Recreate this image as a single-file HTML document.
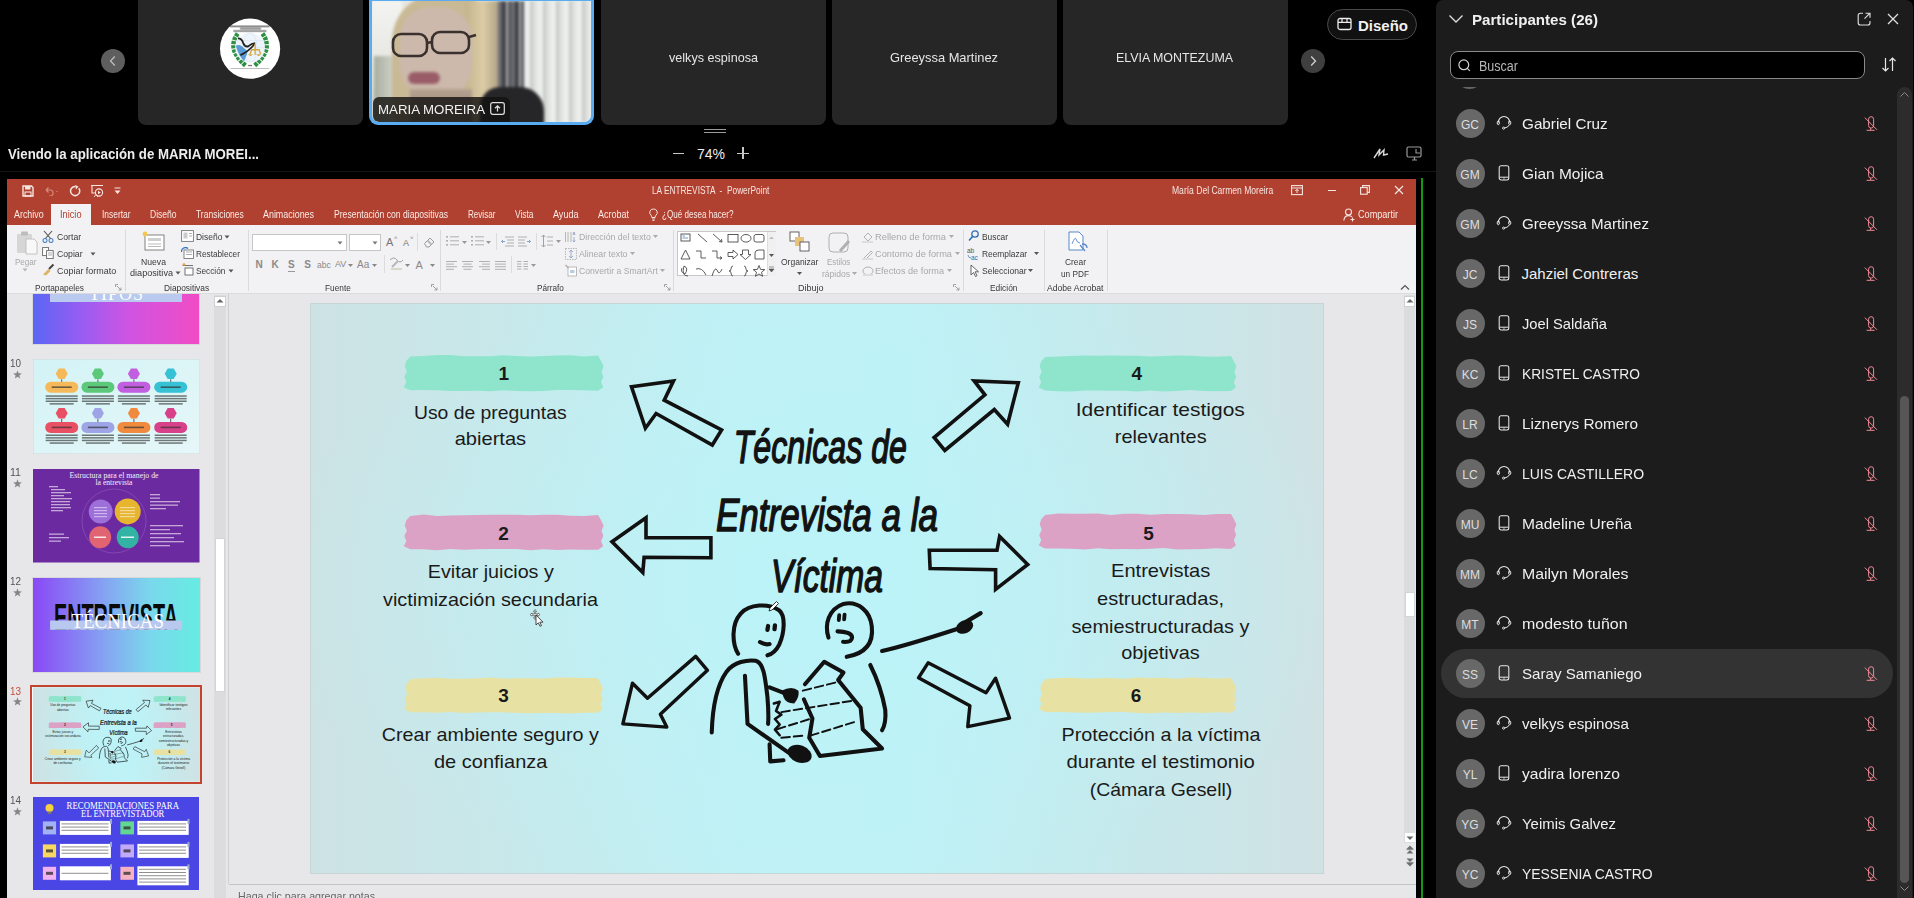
<!DOCTYPE html>
<html><head><meta charset="utf-8"><style>
*{margin:0;padding:0;box-sizing:border-box}
html,body{width:1914px;height:898px;overflow:hidden;background:#000;font-family:"Liberation Sans",sans-serif;position:relative}
.a{position:absolute}
.t{position:absolute;white-space:pre;line-height:1}
.navc{position:absolute;width:24px;height:24px;border-radius:12px;background:#5e5e5e}
</style></head><body>
<div class="navc" style="left:101px;top:49px"><svg width="24" height="24" viewBox="0 0 24 24"><path d="M13.8 7.5 L9.5 12 L13.8 16.5" fill="none" stroke="#bdbdbd" stroke-width="1.3"/></svg></div>
<div class="navc" style="left:1301px;top:49px;background:#3f3f3f"><svg width="24" height="24" viewBox="0 0 24 24"><path d="M10.2 7.5 L14.5 12 L10.2 16.5" fill="none" stroke="#d0d0d0" stroke-width="1.3"/></svg></div>
<div class="a" style="left:138px;top:0px;width:225px;height:125px;background:#262626;border-radius:0 0 8px 8px"></div>
<div class="a" style="left:601px;top:0px;width:225px;height:125px;background:#262626;border-radius:0 0 8px 8px"></div>
<div class="a" style="left:832px;top:0px;width:225px;height:125px;background:#262626;border-radius:0 0 8px 8px"></div>
<div class="a" style="left:1063px;top:0px;width:225px;height:125px;background:#262626;border-radius:0 0 8px 8px"></div>
<svg class="a" style="left:215px;top:15px" width="70" height="70" viewBox="0 0 898 898">
<circle cx="450" cy="432" r="386" fill="#fff"/>
<g fill="#444" opacity="0.75"><rect x="195" y="135" width="505" height="20"/><rect x="320" y="165" width="270" height="18"/><rect x="235" y="195" width="425" height="20"/><rect x="200" y="680" width="495" height="10" opacity="0.6"/><rect x="425" y="640" width="50" height="16"/></g>
<g fill="none" stroke="#2f8f45" stroke-width="58" stroke-dasharray="42 12"><path d="M292,238 Q140,440 400,655"/><path d="M608,238 Q760,440 500,655"/></g>
<circle cx="450" cy="420" r="190" fill="#eef4fb"/>
<g fill="none" stroke="#b8cfe8" stroke-width="5" opacity="0.7"><ellipse cx="450" cy="420" rx="90" ry="190"/><path d="M260 420 H640 M280 330 H620 M280 510 H620"/></g>
<path d="M268,395 Q300,370 345,400 L420,465 Q405,530 372,595 Q300,520 268,395 Z" fill="#5b9bd5"/>
<path d="M295,300 Q345,300 362,360 Q385,415 425,402 Q470,360 515,360" fill="none" stroke="#222" stroke-width="24"/>
<path d="M325,515 Q430,470 505,375" fill="none" stroke="#222" stroke-width="22"/>
<g fill="none" stroke="#d4aa3c" stroke-width="18"><path d="M515,370 L515,510 M465,445 L575,445 M470 445 L450 500 M565 445 L585 500"/></g>
<g fill="#d4aa3c"><path d="M425 505 Q455 545 485 505 Z"/><path d="M530 505 Q560 545 590 505 Z"/></g>
</svg>
<div class="a" style="left:369px;top:0;width:225px;height:125px;border-radius:0 0 9px 9px;background:#5aacf2"></div>
<div class="a" style="left:372px;top:1px;width:219px;height:121px;border-radius:0 0 7px 7px;overflow:hidden;background:#e6e7e3">
 <div class="a" style="left:0;top:0;width:219px;height:121px;filter:blur(1.8px)">
  <div class="a" style="left:0;top:0;width:30px;height:121px;background:linear-gradient(180deg,#f3f4f1,#e8e9e4 45%,#c4c8bc)"></div>
  <div class="a" style="left:2px;top:55px;width:20px;height:66px;background:linear-gradient(90deg,#a8ae9f,#cfd2c8)"></div>
  <div class="a" style="left:20px;top:-8px;width:110px;height:135px;border-radius:48px 52px 10px 10px;background:#c9b994"></div>
  <div class="a" style="left:93px;top:0;width:36px;height:121px;background:linear-gradient(90deg,#c4b48e,#dccca6 50%,#a89c80)"></div>
  <div class="a" style="left:28px;top:6px;width:72px;height:92px;border-radius:30px 32px 34px 34px;background:#ccb9ac"></div>
  <div class="a" style="left:38px;top:88px;width:62px;height:33px;background:linear-gradient(180deg,#b7a290,#8a7a6c)"></div>
  <div class="a" style="left:126px;top:0;width:26px;height:121px;background:repeating-linear-gradient(90deg,#6c6e72 0 4px,#3c3e44 4px 8px,#b8bab8 8px 10px,#50525a 10px 13px)"></div>
  <div class="a" style="left:152px;top:0;width:67px;height:121px;background:repeating-linear-gradient(90deg,#eceeeb 0 6px,#c9cbc8 6px 9px,#dfe1de 9px 13px)"></div>
  <div class="a" style="left:108px;top:86px;width:64px;height:42px;border-radius:20px 24px 0 0;background:#262527"></div>
  <div class="a" style="left:36px;top:71px;width:32px;height:12px;border-radius:6px;background:#9a5d68"></div>
 </div>
 <svg class="a" style="left:0;top:0" width="219" height="121"><g fill="none" stroke="#3a302e" stroke-width="2.6"><rect x="21" y="33" width="34" height="22" rx="8"/><rect x="60" y="31" width="37" height="21" rx="8"/><path d="M55 42 L60 41 M97 36 L104 34"/></g></svg>
 <div class="a" style="left:1px;top:96px;width:137px;height:25px;border-radius:6px 6px 0 6px;background:rgba(20,18,17,0.82)"></div>
</div>
<div class="t" style="left:378.00px;top:103.02px;font-size:13.5px;color:#f2f2f2;font-weight:normal;font-style:normal;font-family:'Liberation Sans',sans-serif;transform:scaleX(0.9838);transform-origin:0 0;">MARIA MOREIRA</div>
<svg class="a" style="left:490px;top:102px;" width="15" height="13" viewBox="0 0 15 13"><rect x="0.7" y="0.7" width="13.6" height="11.6" rx="2" fill="none" stroke="#e0e0e0" stroke-width="1.2"/><path d="M7.5 9.5 V4 M5 6.3 L7.5 3.8 L10 6.3" fill="none" stroke="#e0e0e0" stroke-width="1.3"/></svg>
<div class="t" style="left:669.00px;top:50.52px;font-size:13.5px;color:#e6e6e6;font-weight:normal;font-style:normal;font-family:'Liberation Sans',sans-serif;transform:scaleX(0.9339);transform-origin:0 0;">velkys espinosa</div>
<div class="t" style="left:890.00px;top:50.52px;font-size:13.5px;color:#e6e6e6;font-weight:normal;font-style:normal;font-family:'Liberation Sans',sans-serif;transform:scaleX(0.9533);transform-origin:0 0;">Greeyssa Martinez</div>
<div class="t" style="left:1115.50px;top:50.52px;font-size:13.5px;color:#e6e6e6;font-weight:normal;font-style:normal;font-family:'Liberation Sans',sans-serif;transform:scaleX(0.9193);transform-origin:0 0;">ELVIA MONTEZUMA</div>
<div class="a" style="left:1327px;top:9px;width:90px;height:31px;background:#111;border:1px solid #4a4a4a;border-radius:16px"></div>
<svg class="a" style="left:1337px;top:17px;" width="15" height="14" viewBox="0 0 15 14"><rect x="1" y="1.5" width="13" height="11" rx="2" fill="none" stroke="#eee" stroke-width="1.3"/><path d="M1 5.3 H14 M5 1.5 V5.3 M10 1.5 V5.3" stroke="#eee" stroke-width="1.2"/></svg>
<div class="t" style="left:1358.00px;top:17.80px;font-size:15px;color:#f2f2f2;font-weight:bold;font-style:normal;font-family:'Liberation Sans',sans-serif;">Diseño</div>
<div class="a" style="left:704px;top:129px;width:22px;height:1px;background:#9a9a9a;"></div>
<div class="a" style="left:704px;top:132px;width:22px;height:1px;background:#9a9a9a;"></div>
<div class="t" style="left:8.00px;top:147.28px;font-size:14px;color:#ededed;font-weight:bold;font-style:normal;font-family:'Liberation Sans',sans-serif;transform:scaleX(0.9462);transform-origin:0 0;">Viendo la aplicación de MARIA MOREI...</div>
<div class="a" style="left:673px;top:152.5px;width:11px;height:1.5px;background:#c8c8c8;"></div>
<div class="t" style="left:697.00px;top:146.78px;font-size:14px;color:#ededed;font-weight:normal;font-style:normal;font-family:'Liberation Sans',sans-serif;">74%</div>
<div class="a" style="left:737px;top:152.5px;width:12px;height:1.5px;background:#c8c8c8;"></div>
<div class="a" style="left:742.2px;top:147px;width:1.6px;height:12px;background:#c8c8c8;"></div>
<svg class="a" style="left:1372px;top:145px;" width="18" height="16" viewBox="0 0 18 16"><path d="M2 13 L8 4 L7 10 L12 5 L11.5 10 L16 9" fill="none" stroke="#d8d8d8" stroke-width="1.4"/></svg>
<svg class="a" style="left:1406px;top:146px;" width="17" height="15" viewBox="0 0 17 15"><rect x="1" y="1" width="14" height="10" rx="1.5" fill="none" stroke="#9a9a9a" stroke-width="1.2"/><path d="M6 14 H11 M8.5 11 V14" stroke="#9a9a9a" stroke-width="1.2"/><path d="M10 3 V7 H14" fill="none" stroke="#9a9a9a" stroke-width="1.1"/></svg>
<div class="a" style="left:0px;top:171px;width:1436px;height:1px;background:#151515;"></div>
<div class="a" style="left:7px;top:179px;width:1409px;height:719px;background:#e7e6e9;"></div>
<div class="a" style="left:7px;top:179px;width:1409px;height:46px;background:#b0402f;"></div>
<div class="a" style="left:7px;top:225px;width:1409px;height:68px;background:#f2f1f3;"></div>
<div class="a" style="left:7px;top:292.5px;width:1409px;height:1px;background:#dcdbdd;"></div>
<svg class="a" style="left:22px;top:185px;" width="12" height="12" viewBox="0 0 12 12"><path d="M1 1 H9.5 L11 2.5 V11 H1 Z" fill="none" stroke="#f6e6e2" stroke-width="1.4"/><rect x="3" y="1" width="5.5" height="3.5" fill="#f6e6e2"/><rect x="3" y="7" width="6" height="4" fill="none" stroke="#f6e6e2" stroke-width="1.1"/></svg>
<svg class="a" style="left:44px;top:186px;" width="16" height="10" viewBox="0 0 16 10"><path d="M2 4 H7 A3.2 3.2 0 0 1 7 10 H5 M2 4 L4.5 1.5 M2 4 L4.5 6.5" fill="none" stroke="#d68c7c" stroke-width="1.2"/><path d="M12 5 L14 5 L13 6.3 Z" fill="#d68c7c"/></svg>
<svg class="a" style="left:69px;top:185px;" width="12" height="12" viewBox="0 0 12 12"><path d="M9.8 3.2 A4.6 4.6 0 1 1 6 1.4" fill="none" stroke="#f6e6e2" stroke-width="1.5"/><path d="M6 0 L9.5 1.6 L7 4.6 Z" fill="#f6e6e2"/></svg>
<svg class="a" style="left:90px;top:184px;" width="14" height="14" viewBox="0 0 14 14"><path d="M1 1.5 H13 M2 1.5 V9 H6" fill="none" stroke="#f6e6e2" stroke-width="1.1"/><circle cx="9" cy="8.5" r="3.6" fill="none" stroke="#f6e6e2" stroke-width="1.1"/><path d="M8 6.8 L10.8 8.5 L8 10.2 Z" fill="#f6e6e2"/><path d="M4 13 L6 10.5 L8 13" fill="none" stroke="#f6e6e2" stroke-width="0.9"/></svg>
<svg class="a" style="left:114px;top:187px;" width="7" height="8" viewBox="0 0 7 8"><path d="M0.5 1 H6.5" stroke="#f6e6e2" stroke-width="1"/><path d="M0.5 3.5 L6.5 3.5 L3.5 7 Z" fill="#f6e6e2"/></svg>
<div class="t" style="left:651.60px;top:185.60px;font-size:10px;color:#f7e4e0;font-weight:normal;font-style:normal;font-family:'Liberation Sans',sans-serif;transform:scaleX(0.8295);transform-origin:0 0;">LA ENTREVISTA  -  PowerPoint</div>
<div class="t" style="left:1171.80px;top:186.00px;font-size:10px;color:#f7e4e0;font-weight:normal;font-style:normal;font-family:'Liberation Sans',sans-serif;transform:scaleX(0.8550);transform-origin:0 0;">María Del Carmen Moreira</div>
<svg class="a" style="left:1291px;top:185px;" width="12" height="11" viewBox="0 0 12 11"><rect x="0.6" y="0.6" width="10.8" height="9" fill="none" stroke="#f6e6e2" stroke-width="1.1"/><path d="M0.6 3 H11.4 M6 4.5 V8 M4.3 6 L6 4.3 L7.7 6" fill="none" stroke="#f6e6e2" stroke-width="1"/></svg>
<div class="a" style="left:1327.5px;top:190px;width:8px;height:1.2px;background:#f6e6e2;"></div>
<svg class="a" style="left:1360px;top:185px;" width="10" height="10" viewBox="0 0 10 10"><rect x="0.6" y="2.6" width="6.6" height="6.6" fill="none" stroke="#f6e6e2" stroke-width="1.1"/><path d="M2.6 2.6 V0.6 H9.4 V7.4 H7.2" fill="none" stroke="#f6e6e2" stroke-width="1.1"/></svg>
<svg class="a" style="left:1394px;top:185px;" width="10" height="10" viewBox="0 0 10 10"><path d="M1 1 L9 9 M9 1 L1 9" stroke="#f6e6e2" stroke-width="1.2"/></svg>
<div class="a" style="left:51.4px;top:204px;width:39.6px;height:21px;background:#f2f1f3;"></div>
<div class="t" style="left:13.80px;top:209.80px;font-size:10px;color:#fbeae6;font-weight:normal;font-style:normal;font-family:'Liberation Sans',sans-serif;transform:scaleX(0.8877);transform-origin:0 0;">Archivo</div>
<div class="t" style="left:101.50px;top:209.80px;font-size:10px;color:#fbeae6;font-weight:normal;font-style:normal;font-family:'Liberation Sans',sans-serif;transform:scaleX(0.8407);transform-origin:0 0;">Insertar</div>
<div class="t" style="left:149.70px;top:209.80px;font-size:10px;color:#fbeae6;font-weight:normal;font-style:normal;font-family:'Liberation Sans',sans-serif;transform:scaleX(0.8545);transform-origin:0 0;">Diseño</div>
<div class="t" style="left:196.00px;top:209.80px;font-size:10px;color:#fbeae6;font-weight:normal;font-style:normal;font-family:'Liberation Sans',sans-serif;transform:scaleX(0.8487);transform-origin:0 0;">Transiciones</div>
<div class="t" style="left:263.00px;top:209.80px;font-size:10px;color:#fbeae6;font-weight:normal;font-style:normal;font-family:'Liberation Sans',sans-serif;transform:scaleX(0.8908);transform-origin:0 0;">Animaciones</div>
<div class="t" style="left:334.00px;top:209.80px;font-size:10px;color:#fbeae6;font-weight:normal;font-style:normal;font-family:'Liberation Sans',sans-serif;transform:scaleX(0.8617);transform-origin:0 0;">Presentación con diapositivas</div>
<div class="t" style="left:468.20px;top:209.80px;font-size:10px;color:#fbeae6;font-weight:normal;font-style:normal;font-family:'Liberation Sans',sans-serif;transform:scaleX(0.8083);transform-origin:0 0;">Revisar</div>
<div class="t" style="left:515.00px;top:209.80px;font-size:10px;color:#fbeae6;font-weight:normal;font-style:normal;font-family:'Liberation Sans',sans-serif;transform:scaleX(0.8390);transform-origin:0 0;">Vista</div>
<div class="t" style="left:553.00px;top:209.80px;font-size:10px;color:#fbeae6;font-weight:normal;font-style:normal;font-family:'Liberation Sans',sans-serif;transform:scaleX(0.9051);transform-origin:0 0;">Ayuda</div>
<div class="t" style="left:598.00px;top:209.80px;font-size:10px;color:#fbeae6;font-weight:normal;font-style:normal;font-family:'Liberation Sans',sans-serif;transform:scaleX(0.8995);transform-origin:0 0;">Acrobat</div>
<div class="t" style="left:662.00px;top:209.80px;font-size:10px;color:#fbeae6;font-weight:normal;font-style:normal;font-family:'Liberation Sans',sans-serif;transform:scaleX(0.8078);transform-origin:0 0;">¿Qué desea hacer?</div>
<div class="t" style="left:60.00px;top:209.80px;font-size:10px;color:#b0402f;font-weight:normal;font-style:normal;font-family:'Liberation Sans',sans-serif;transform:scaleX(0.9210);transform-origin:0 0;">Inicio</div>
<svg class="a" style="left:649px;top:208px;" width="9" height="13" viewBox="0 0 9 13"><path d="M4.5 1 A3.5 3.5 0 0 1 7 7.2 Q6.2 8 6.2 9.5 H2.8 Q2.8 8 2 7.2 A3.5 3.5 0 0 1 4.5 1 Z" fill="none" stroke="#f6e6e2" stroke-width="1"/><path d="M3 11 H6 M3.5 12.5 H5.5" stroke="#f6e6e2" stroke-width="0.9"/></svg>
<svg class="a" style="left:1343px;top:208px;" width="13" height="14" viewBox="0 0 13 14"><circle cx="5.5" cy="4" r="3" fill="none" stroke="#f6e6e2" stroke-width="1.1"/><path d="M0.8 12.5 Q1.5 7.6 5.5 7.6 Q8 7.6 9 9" fill="none" stroke="#f6e6e2" stroke-width="1.1"/><path d="M9.5 9.5 V13.5 M7.5 11.5 H11.5" stroke="#f6e6e2" stroke-width="1.1"/></svg>
<div class="t" style="left:1358.30px;top:210.00px;font-size:10px;color:#fbeae6;font-weight:normal;font-style:normal;font-family:'Liberation Sans',sans-serif;transform:scaleX(0.9112);transform-origin:0 0;">Compartir</div>
<div class="a" style="left:124.6px;top:230px;width:1px;height:61px;background:#dadada;"></div>
<div class="a" style="left:247.8px;top:230px;width:1px;height:61px;background:#dadada;"></div>
<div class="a" style="left:440px;top:230px;width:1px;height:61px;background:#dadada;"></div>
<div class="a" style="left:672.5px;top:230px;width:1px;height:61px;background:#dadada;"></div>
<div class="a" style="left:962.6px;top:230px;width:1px;height:61px;background:#dadada;"></div>
<div class="a" style="left:1044.4px;top:230px;width:1px;height:61px;background:#dadada;"></div>
<div class="a" style="left:1106.5px;top:230px;width:1px;height:61px;background:#dadada;"></div>
<div class="a" style="left:417px;top:233px;width:1px;height:18px;background:#dcdcdc;"></div>
<div class="a" style="left:383.7px;top:255px;width:1px;height:18px;background:#dcdcdc;"></div>
<div class="a" style="left:496.2px;top:233px;width:1px;height:17px;background:#dcdcdc;"></div>
<div class="a" style="left:535.9px;top:233px;width:1px;height:17px;background:#dcdcdc;"></div>
<div class="a" style="left:511px;top:256px;width:1px;height:17px;background:#dcdcdc;"></div>
<div class="t" style="left:34.60px;top:282.84px;font-size:9.5px;color:#383838;font-weight:normal;font-style:normal;font-family:'Liberation Sans',sans-serif;transform:scaleX(0.8735);transform-origin:0 0;">Portapapeles</div>
<div class="t" style="left:163.50px;top:282.84px;font-size:9.5px;color:#383838;font-weight:normal;font-style:normal;font-family:'Liberation Sans',sans-serif;transform:scaleX(0.8806);transform-origin:0 0;">Diapositivas</div>
<div class="t" style="left:324.80px;top:282.84px;font-size:9.5px;color:#383838;font-weight:normal;font-style:normal;font-family:'Liberation Sans',sans-serif;transform:scaleX(0.8723);transform-origin:0 0;">Fuente</div>
<div class="t" style="left:536.70px;top:282.84px;font-size:9.5px;color:#383838;font-weight:normal;font-style:normal;font-family:'Liberation Sans',sans-serif;transform:scaleX(0.8635);transform-origin:0 0;">Párrafo</div>
<div class="t" style="left:798.40px;top:282.84px;font-size:9.5px;color:#383838;font-weight:normal;font-style:normal;font-family:'Liberation Sans',sans-serif;transform:scaleX(0.9505);transform-origin:0 0;">Dibujo</div>
<div class="t" style="left:989.80px;top:282.84px;font-size:9.5px;color:#383838;font-weight:normal;font-style:normal;font-family:'Liberation Sans',sans-serif;transform:scaleX(0.8826);transform-origin:0 0;">Edición</div>
<div class="t" style="left:1047.40px;top:282.84px;font-size:9.5px;color:#383838;font-weight:normal;font-style:normal;font-family:'Liberation Sans',sans-serif;transform:scaleX(0.9065);transform-origin:0 0;">Adobe Acrobat</div>
<svg class="a" style="left:115px;top:284px;" width="7" height="7" viewBox="0 0 7 7"><path d="M0.5 0.5 H3 M0.5 0.5 V3 M2 2 L6 6 M6 3.5 V6 H3.5" fill="none" stroke="#8d8d8d" stroke-width="0.8"/></svg>
<svg class="a" style="left:430.9px;top:284px;" width="7" height="7" viewBox="0 0 7 7"><path d="M0.5 0.5 H3 M0.5 0.5 V3 M2 2 L6 6 M6 3.5 V6 H3.5" fill="none" stroke="#8d8d8d" stroke-width="0.8"/></svg>
<svg class="a" style="left:663.7px;top:284px;" width="7" height="7" viewBox="0 0 7 7"><path d="M0.5 0.5 H3 M0.5 0.5 V3 M2 2 L6 6 M6 3.5 V6 H3.5" fill="none" stroke="#8d8d8d" stroke-width="0.8"/></svg>
<svg class="a" style="left:953px;top:284px;" width="7" height="7" viewBox="0 0 7 7"><path d="M0.5 0.5 H3 M0.5 0.5 V3 M2 2 L6 6 M6 3.5 V6 H3.5" fill="none" stroke="#8d8d8d" stroke-width="0.8"/></svg>
<svg class="a" style="left:1400px;top:284px;" width="10" height="7" viewBox="0 0 10 7"><path d="M1 5.5 L5 1.5 L9 5.5" fill="none" stroke="#555" stroke-width="1.2"/></svg>
<svg class="a" style="left:15px;top:230px;" width="24" height="26" viewBox="0 0 24 26"><rect x="2" y="4" width="15" height="19" rx="1" fill="#d6d6d6"/><rect x="6" y="1.5" width="7" height="4" rx="1" fill="#bdbdbd"/><path d="M11 9 H19 L22 12 V24 H11 Z" fill="#f8f8f8" stroke="#bdbdbd" stroke-width="0.9"/></svg>
<div class="t" style="left:14.50px;top:256.94px;font-size:9.5px;color:#a9a9a9;font-weight:normal;font-style:normal;font-family:'Liberation Sans',sans-serif;transform:scaleX(0.8481);transform-origin:0 0;">Pegar</div>
<svg class="a" style="left:22px;top:268px;" width="6" height="4" viewBox="0 0 6 4"><path d="M0.5 0.5 H5.5 L3 3.5 Z" fill="#b5b5b5"/></svg>
<svg class="a" style="left:42px;top:230px;" width="12" height="13" viewBox="0 0 12 13"><path d="M2 1 L9 9 M10 1 L3 9" stroke="#505050" stroke-width="1.1"/><circle cx="3" cy="10.5" r="2" fill="none" stroke="#4a84c4" stroke-width="1.1"/><circle cx="9" cy="10.5" r="2" fill="none" stroke="#4a84c4" stroke-width="1.1"/></svg>
<div class="t" style="left:56.70px;top:231.84px;font-size:9.5px;color:#3a3a3a;font-weight:normal;font-style:normal;font-family:'Liberation Sans',sans-serif;transform:scaleX(0.9131);transform-origin:0 0;">Cortar</div>
<svg class="a" style="left:42px;top:247px;" width="12" height="12" viewBox="0 0 12 12"><rect x="0.6" y="0.6" width="6" height="8" fill="#fff" stroke="#666" stroke-width="0.9"/><rect x="4.6" y="3.6" width="6.6" height="8" fill="#fff" stroke="#666" stroke-width="0.9"/><path d="M6 6 H10 M6 8 H10" stroke="#888" stroke-width="0.7"/></svg>
<div class="t" style="left:56.70px;top:248.64px;font-size:9.5px;color:#3a3a3a;font-weight:normal;font-style:normal;font-family:'Liberation Sans',sans-serif;transform:scaleX(0.9148);transform-origin:0 0;">Copiar</div>
<svg class="a" style="left:89.5px;top:251.5px;" width="6" height="4" viewBox="0 0 6 4"><path d="M0.5 0.5 H5.5 L3 3.5 Z" fill="#555"/></svg>
<svg class="a" style="left:42px;top:263px;" width="13" height="13" viewBox="0 0 13 13"><path d="M7 6 L11.5 1.5" stroke="#444" stroke-width="2"/><path d="M1 11.5 L6.5 6 L8.5 8 L4 12.5 Z" fill="#d9b463"/></svg>
<div class="t" style="left:56.70px;top:265.74px;font-size:9.5px;color:#3a3a3a;font-weight:normal;font-style:normal;font-family:'Liberation Sans',sans-serif;transform:scaleX(0.9422);transform-origin:0 0;">Copiar formato</div>
<svg class="a" style="left:141px;top:230px;" width="24" height="21" viewBox="0 0 24 21"><rect x="4" y="5" width="19" height="15" fill="#fff" stroke="#777" stroke-width="0.9"/><rect x="7" y="8" width="13" height="3" fill="#cfcfcf"/><path d="M7 14 H20 M7 16.5 H20" stroke="#aaa" stroke-width="0.8"/><circle cx="4" cy="4" r="2.4" fill="#f2c94c"/></svg>
<div class="t" style="left:141.00px;top:256.94px;font-size:9.5px;color:#3a3a3a;font-weight:normal;font-style:normal;font-family:'Liberation Sans',sans-serif;transform:scaleX(0.9104);transform-origin:0 0;">Nueva</div>
<div class="t" style="left:129.60px;top:268.24px;font-size:9.5px;color:#3a3a3a;font-weight:normal;font-style:normal;font-family:'Liberation Sans',sans-serif;transform:scaleX(0.9579);transform-origin:0 0;">diapositiva</div>
<svg class="a" style="left:174.5px;top:271px;" width="6" height="4" viewBox="0 0 6 4"><path d="M0.5 0.5 H5.5 L3 3.5 Z" fill="#555"/></svg>
<svg class="a" style="left:181px;top:230px;" width="13" height="12" viewBox="0 0 13 12"><rect x="0.6" y="0.6" width="11.8" height="10.8" fill="#fff" stroke="#777" stroke-width="0.9"/><rect x="2.5" y="2.5" width="4" height="6" fill="#ccc"/><path d="M8 3.5 H11 M8 6 H11" stroke="#999" stroke-width="0.8"/></svg>
<div class="t" style="left:195.60px;top:231.84px;font-size:9.5px;color:#3a3a3a;font-weight:normal;font-style:normal;font-family:'Liberation Sans',sans-serif;transform:scaleX(0.8927);transform-origin:0 0;">Diseño</div>
<svg class="a" style="left:224px;top:235px;" width="6" height="4" viewBox="0 0 6 4"><path d="M0.5 0.5 H5.5 L3 3.5 Z" fill="#555"/></svg>
<svg class="a" style="left:181px;top:247px;" width="13" height="12" viewBox="0 0 13 12"><rect x="3" y="3" width="9.5" height="8.5" fill="#fff" stroke="#777" stroke-width="0.9"/><path d="M0.5 5 A4 4 0 0 1 7 1.5" fill="none" stroke="#2f74c0" stroke-width="1.2"/><path d="M5 5 H11 M5 7.5 H11" stroke="#999" stroke-width="0.8"/></svg>
<div class="t" style="left:195.60px;top:248.64px;font-size:9.5px;color:#3a3a3a;font-weight:normal;font-style:normal;font-family:'Liberation Sans',sans-serif;transform:scaleX(0.8660);transform-origin:0 0;">Restablecer</div>
<svg class="a" style="left:182px;top:263px;" width="12" height="13" viewBox="0 0 12 13"><rect x="3" y="5" width="8" height="7" fill="#fff" stroke="#666" stroke-width="0.9"/><path d="M0.5 2.5 H11" stroke="#666" stroke-width="0.9"/><circle cx="2" cy="1.5" r="1.3" fill="#f0a030"/></svg>
<div class="t" style="left:195.60px;top:265.74px;font-size:9.5px;color:#3a3a3a;font-weight:normal;font-style:normal;font-family:'Liberation Sans',sans-serif;transform:scaleX(0.8699);transform-origin:0 0;">Sección</div>
<svg class="a" style="left:227.5px;top:268.5px;" width="6" height="4" viewBox="0 0 6 4"><path d="M0.5 0.5 H5.5 L3 3.5 Z" fill="#555"/></svg>
<div class="a" style="left:251.5px;top:234.4px;width:95.8px;height:16.3px;background:#fff;border:1px solid #c6c6c6"></div>
<div class="a" style="left:348.6px;top:234.4px;width:32.6px;height:16.3px;background:#fff;border:1px solid #c6c6c6"></div>
<svg class="a" style="left:337px;top:241px;" width="6" height="4" viewBox="0 0 6 4"><path d="M0.5 0.5 H5.5 L3 3.5 Z" fill="#777"/></svg>
<svg class="a" style="left:372px;top:241px;" width="6" height="4" viewBox="0 0 6 4"><path d="M0.5 0.5 H5.5 L3 3.5 Z" fill="#777"/></svg>
<div class="t" style="left:386.00px;top:237.22px;font-size:11px;color:#777;font-weight:normal;font-style:normal;font-family:'Liberation Sans',sans-serif;">A</div>
<div class="t" style="left:394.00px;top:235.12px;font-size:6px;color:#777;font-weight:normal;font-style:normal;font-family:'Liberation Sans',sans-serif;">˄</div>
<div class="t" style="left:403.00px;top:239.18px;font-size:9px;color:#777;font-weight:normal;font-style:normal;font-family:'Liberation Sans',sans-serif;">A</div>
<div class="t" style="left:410.00px;top:235.12px;font-size:6px;color:#777;font-weight:normal;font-style:normal;font-family:'Liberation Sans',sans-serif;">˅</div>
<svg class="a" style="left:423px;top:236px;" width="13" height="12" viewBox="0 0 13 12"><path d="M1.5 7.5 L7 2 L11 6 L6 11 H3.5 Z" fill="none" stroke="#999" stroke-width="1"/><path d="M4.5 4.5 L8.5 8.5" stroke="#bbb" stroke-width="2"/></svg>
<div class="t" style="left:255.50px;top:260.00px;font-size:10px;color:#8a8a8a;font-weight:bold;font-style:normal;font-family:'Liberation Sans',sans-serif;">N</div>
<div class="t" style="left:271.50px;top:260.00px;font-size:10px;color:#8a8a8a;font-weight:bold;font-style:normal;font-family:'Liberation Sans',sans-serif;">K</div>
<div class="t" style="left:288.00px;top:260.00px;font-size:10px;color:#8a8a8a;font-weight:bold;font-style:normal;font-family:'Liberation Sans',sans-serif;">S</div>
<div class="t" style="left:304.20px;top:260.00px;font-size:10px;color:#8a8a8a;font-weight:bold;font-style:normal;font-family:'Liberation Sans',sans-serif;">S</div>
<div class="t" style="left:317.00px;top:260.72px;font-size:8.5px;color:#8a8a8a;font-weight:normal;font-style:normal;font-family:'Liberation Sans',sans-serif;">abc</div>
<div class="t" style="left:335.00px;top:260.48px;font-size:9px;color:#8a8a8a;font-weight:normal;font-style:normal;font-family:'Liberation Sans',sans-serif;">AV</div>
<div class="t" style="left:357.00px;top:260.00px;font-size:10px;color:#8a8a8a;font-weight:normal;font-style:normal;font-family:'Liberation Sans',sans-serif;">Aa</div>
<div class="a" style="left:288px;top:270.5px;width:6.5px;height:0.8px;background:#999;"></div>
<svg class="a" style="left:348px;top:263.5px;" width="5" height="3" viewBox="0 0 5 3"><path d="M0 0 H5 L2.5 3 Z" fill="#888"/></svg>
<svg class="a" style="left:372px;top:263.5px;" width="5" height="3" viewBox="0 0 5 3"><path d="M0 0 H5 L2.5 3 Z" fill="#888"/></svg>
<svg class="a" style="left:404.5px;top:263.5px;" width="5" height="3" viewBox="0 0 5 3"><path d="M0 0 H5 L2.5 3 Z" fill="#888"/></svg>
<svg class="a" style="left:429.5px;top:263.5px;" width="5" height="3" viewBox="0 0 5 3"><path d="M0 0 H5 L2.5 3 Z" fill="#888"/></svg>
<svg class="a" style="left:389px;top:256px;" width="15" height="14" viewBox="0 0 15 14"><path d="M1 4 Q5 0 8 4 Q11 8 14 4" fill="none" stroke="#999" stroke-width="0.9"/><path d="M3 11 L9 5" stroke="#b8b8b8" stroke-width="2"/><rect x="2" y="12" width="11" height="2" fill="#d8d8c8"/></svg>
<div class="t" style="left:415.50px;top:259.52px;font-size:11px;color:#8a8a8a;font-weight:normal;font-style:normal;font-family:'Liberation Sans',sans-serif;">A</div>
<svg class="a" style="left:445.5px;top:236px;" width="13" height="13" viewBox="0 0 13 13"><rect x="0" y="0" width="2" height="1.6" fill="#b0b0b0"/><rect x="4" y="0.3" width="9" height="1" fill="#b0b0b0"/><rect x="0" y="4" width="2" height="1.6" fill="#b0b0b0"/><rect x="4" y="4.3" width="9" height="1" fill="#b0b0b0"/><rect x="0" y="8" width="2" height="1.6" fill="#b0b0b0"/><rect x="4" y="8.3" width="9" height="1" fill="#b0b0b0"/></svg>
<svg class="a" style="left:461.5px;top:240.5px;" width="5" height="3" viewBox="0 0 5 3"><path d="M0 0 H5 L2.5 3 Z" fill="#999"/></svg>
<svg class="a" style="left:470.5px;top:236px;" width="13" height="13" viewBox="0 0 13 13"><rect x="0" y="0" width="2" height="1.6" fill="#b0b0b0"/><rect x="4" y="0.3" width="9" height="1" fill="#b0b0b0"/><rect x="0" y="4" width="2" height="1.6" fill="#b0b0b0"/><rect x="4" y="4.3" width="9" height="1" fill="#b0b0b0"/><rect x="0" y="8" width="2" height="1.6" fill="#b0b0b0"/><rect x="4" y="8.3" width="9" height="1" fill="#b0b0b0"/></svg>
<svg class="a" style="left:486px;top:240.5px;" width="5" height="3" viewBox="0 0 5 3"><path d="M0 0 H5 L2.5 3 Z" fill="#999"/></svg>
<svg class="a" style="left:501px;top:236px;" width="13" height="11" viewBox="0 0 13 11"><path d="M4 1 H13 M6 4 H13 M6 7 H13 M4 10 H13" stroke="#b0b0b0" stroke-width="1"/><path d="M4 5.5 L0.5 5.5 M2 4 L0.5 5.5 L2 7" fill="none" stroke="#7c9cc8" stroke-width="0.9"/></svg>
<svg class="a" style="left:517.5px;top:236px;" width="13" height="11" viewBox="0 0 13 11"><path d="M0 1 H9 M0 4 H7 M0 7 H7 M0 10 H9" stroke="#b0b0b0" stroke-width="1"/><path d="M9 5.5 L12.5 5.5 M11 4 L12.5 5.5 L11 7" fill="none" stroke="#7c9cc8" stroke-width="0.9"/></svg>
<svg class="a" style="left:541px;top:234px;" width="12" height="14" viewBox="0 0 12 14"><path d="M2.5 1 V13 M0.5 3 L2.5 1 L4.5 3 M0.5 11 L2.5 13 L4.5 11" fill="none" stroke="#999" stroke-width="0.9"/><path d="M6 3 H12 M6 7 H12 M6 11 H12" stroke="#b0b0b0" stroke-width="1"/></svg>
<svg class="a" style="left:555.5px;top:240px;" width="5" height="3" viewBox="0 0 5 3"><path d="M0 0 H5 L2.5 3 Z" fill="#999"/></svg>
<svg class="a" style="left:445.7px;top:260.5px;" width="11" height="9" viewBox="0 0 11 9"><rect x="0" y="0" width="11" height="1" fill="#b0b0b0"/><rect x="0" y="2.6" width="8" height="1" fill="#b0b0b0"/><rect x="0" y="5.2" width="11" height="1" fill="#b0b0b0"/><rect x="0" y="7.8" width="8" height="1" fill="#b0b0b0"/></svg>
<svg class="a" style="left:462px;top:260.5px;" width="11" height="9" viewBox="0 0 11 9"><rect x="0" y="0" width="11" height="1" fill="#b0b0b0"/><rect x="1.5" y="2.6" width="8" height="1" fill="#b0b0b0"/><rect x="0" y="5.2" width="11" height="1" fill="#b0b0b0"/><rect x="1.5" y="7.8" width="8" height="1" fill="#b0b0b0"/></svg>
<svg class="a" style="left:478.7px;top:260.5px;" width="11" height="9" viewBox="0 0 11 9"><rect x="0" y="0" width="11" height="1" fill="#b0b0b0"/><rect x="3" y="2.6" width="8" height="1" fill="#b0b0b0"/><rect x="0" y="5.2" width="11" height="1" fill="#b0b0b0"/><rect x="3" y="7.8" width="8" height="1" fill="#b0b0b0"/></svg>
<svg class="a" style="left:494.9px;top:260.5px;" width="11" height="9" viewBox="0 0 11 9"><rect x="0" y="0" width="11" height="1" fill="#b0b0b0"/><rect x="0" y="2.6" width="11" height="1" fill="#b0b0b0"/><rect x="0" y="5.2" width="11" height="1" fill="#b0b0b0"/><rect x="0" y="7.8" width="11" height="1" fill="#b0b0b0"/></svg>
<svg class="a" style="left:517px;top:260.5px;" width="11" height="9" viewBox="0 0 11 9"><path d="M0 0.5 H4.5 M6.5 0.5 H11 M0 3 H4.5 M6.5 3 H11 M0 5.5 H4.5 M6.5 5.5 H11 M0 8 H4.5 M6.5 8 H11" stroke="#b0b0b0" stroke-width="1"/></svg>
<svg class="a" style="left:531px;top:263.5px;" width="5" height="3" viewBox="0 0 5 3"><path d="M0 0 H5 L2.5 3 Z" fill="#999"/></svg>
<svg class="a" style="left:565px;top:231px;" width="11" height="12" viewBox="0 0 11 12"><path d="M0.5 1 V11 M3 1 V11 M6 1 V11" stroke="#b0b0b0" stroke-width="0.9"/><path d="M8 4 L9 1 L10 4 M8.3 3 H9.7 M9 6 V11 M7.8 9.5 L9 11 L10.2 9.5" fill="none" stroke="#8aa0c0" stroke-width="0.8"/></svg>
<div class="t" style="left:579.20px;top:232.04px;font-size:9.5px;color:#a9a9a9;font-weight:normal;font-style:normal;font-family:'Liberation Sans',sans-serif;transform:scaleX(0.9188);transform-origin:0 0;">Dirección del texto</div>
<svg class="a" style="left:653px;top:235px;" width="5" height="3" viewBox="0 0 5 3"><path d="M0 0 H5 L2.5 3 Z" fill="#aaa"/></svg>
<svg class="a" style="left:565px;top:248px;" width="12" height="12" viewBox="0 0 12 12"><rect x="0.5" y="0.5" width="11" height="11" fill="none" stroke="#aaa" stroke-width="0.8" stroke-dasharray="1.5 1"/><path d="M6 2 V10 M4 4 L6 2 L8 4 M4 8 L6 10 L8 8" fill="none" stroke="#8aa0c0" stroke-width="0.8"/></svg>
<div class="t" style="left:579.20px;top:249.04px;font-size:9.5px;color:#a9a9a9;font-weight:normal;font-style:normal;font-family:'Liberation Sans',sans-serif;transform:scaleX(0.9165);transform-origin:0 0;">Alinear texto</div>
<svg class="a" style="left:629.5px;top:252px;" width="5" height="3" viewBox="0 0 5 3"><path d="M0 0 H5 L2.5 3 Z" fill="#aaa"/></svg>
<svg class="a" style="left:565px;top:264px;" width="12" height="13" viewBox="0 0 12 13"><rect x="3" y="3" width="8.5" height="9" fill="#fff" stroke="#aaa" stroke-width="0.8"/><path d="M0.5 1 L3.5 4" stroke="#aaa" stroke-width="1.2"/><rect x="5" y="6" width="4.5" height="3" fill="#b8cde0"/></svg>
<div class="t" style="left:579.20px;top:266.04px;font-size:9.5px;color:#a9a9a9;font-weight:normal;font-style:normal;font-family:'Liberation Sans',sans-serif;transform:scaleX(0.9102);transform-origin:0 0;">Convertir a SmartArt</div>
<svg class="a" style="left:660px;top:269px;" width="5" height="3" viewBox="0 0 5 3"><path d="M0 0 H5 L2.5 3 Z" fill="#aaa"/></svg>
<div class="a" style="left:677.2px;top:230.9px;width:99.3px;height:44.9px;background:#fff;border:1px solid #c8c8c8"></div>
<div class="a" style="left:766.5px;top:231.5px;width:9.5px;height:44px;background:#f0f0f0;border-left:1px solid #ddd"></div>
<svg class="a" style="left:768px;top:234px;" width="7" height="40" viewBox="0 0 7 40"><path d="M1 5 L3.5 2.5 L6 5" fill="#bbb"/><path d="M1 20 H6 L3.5 23 Z" fill="#555"/><path d="M1 33 H6 M1 35 H6 L3.5 38 Z" fill="#555" stroke="#555" stroke-width="0.6"/></svg>
<svg class="a" style="left:679.5px;top:232px;" width="88" height="46" viewBox="0 0 88 46"><g fill="none" stroke="#4a4a4a" stroke-width="0.9"><rect x="1" y="2" width="9" height="7"/><path d="M2.5 4 H5 M2.5 6 H8" stroke="#6a8fc0"/><path d="M18 2 L27 10"/><path d="M33 2 L42 10 M42 10 L39 9.5 M42 10 L41.5 7"/><rect x="48" y="2.5" width="10" height="7.5"/><ellipse cx="66" cy="6.3" rx="5" ry="3.8"/><rect x="74" y="2.5" width="10" height="7.5" rx="2"/><path d="M1 27 L5.5 18 L10 27 Z"/><path d="M16 19 H21 V26 H26"/><path d="M32 19 H37 V26 H42 M42 26 L40 24.5 M42 26 L40 27.5"/><path d="M48 20.5 H53 V18 L58 22.5 L53 27 V24.5 H48 Z"/><path d="M62.5 18 H68.5 V22.5 H71 L65.5 27.5 L60 22.5 H62.5 Z"/><path d="M75 27 V21 Q75 18 79 18 H84 V27 Z"/><path d="M2 36 Q0 40 5 42 Q9 36 4 34 Q1 44 8 44" /><path d="M16 37 Q22 35 26 43"/><path d="M32 44 Q35 34 37 38 Q39 44 42 37"/><path d="M53 34 Q51 34 51 37 Q51 39 49 39 Q51 39 51 41 Q51 44 53 44"/><path d="M64 34 Q66 34 66 37 Q66 39 68 39 Q66 39 66 41 Q66 44 64 44"/><path d="M79 33.5 L80.6 37.4 L84.8 37.6 L81.5 40.2 L82.6 44.3 L79 42 L75.4 44.3 L76.5 40.2 L73.2 37.6 L77.4 37.4 Z"/></g></svg>
<svg class="a" style="left:789px;top:231px;" width="22" height="22" viewBox="0 0 22 22"><rect x="1" y="1" width="9" height="9" fill="#fff" stroke="#555" stroke-width="0.9"/><rect x="6" y="6" width="9" height="9" fill="#e8c27a"/><rect x="11" y="11" width="9" height="9" fill="#fff" stroke="#555" stroke-width="0.9"/></svg>
<div class="t" style="left:781.00px;top:257.44px;font-size:9.5px;color:#3a3a3a;font-weight:normal;font-style:normal;font-family:'Liberation Sans',sans-serif;transform:scaleX(0.8942);transform-origin:0 0;">Organizar</div>
<svg class="a" style="left:797.3px;top:272px;" width="5" height="3" viewBox="0 0 5 3"><path d="M0 0 H5 L2.5 3 Z" fill="#555"/></svg>
<svg class="a" style="left:828px;top:232px;" width="24" height="22" viewBox="0 0 24 22"><rect x="1" y="1" width="19" height="19" rx="4" fill="none" stroke="#b0b0b0" stroke-width="1"/><path d="M12 19 L21 9" stroke="#b0b0b0" stroke-width="3"/></svg>
<div class="t" style="left:827.40px;top:257.44px;font-size:9.5px;color:#a9a9a9;font-weight:normal;font-style:normal;font-family:'Liberation Sans',sans-serif;transform:scaleX(0.8327);transform-origin:0 0;">Estilos</div>
<div class="t" style="left:822.00px;top:269.14px;font-size:9.5px;color:#a9a9a9;font-weight:normal;font-style:normal;font-family:'Liberation Sans',sans-serif;transform:scaleX(0.8986);transform-origin:0 0;">rápidos</div>
<svg class="a" style="left:852px;top:272px;" width="5" height="3" viewBox="0 0 5 3"><path d="M0 0 H5 L2.5 3 Z" fill="#aaa"/></svg>
<svg class="a" style="left:862px;top:230.6px;" width="12" height="12" viewBox="0 0 12 12"><path d="M2 6 L6 2 L10 6 L6 10 Z" fill="none" stroke="#aaa" stroke-width="0.9"/><rect x="0" y="10" width="11" height="2" fill="#ddd"/></svg>
<div class="t" style="left:875.00px;top:232.04px;font-size:9.5px;color:#a9a9a9;font-weight:normal;font-style:normal;font-family:'Liberation Sans',sans-serif;transform:scaleX(0.9814);transform-origin:0 0;">Relleno de forma</div>
<svg class="a" style="left:949px;top:235.1px;" width="5" height="3" viewBox="0 0 5 3"><path d="M0 0 H5 L2.5 3 Z" fill="#aaa"/></svg>
<svg class="a" style="left:862px;top:247.6px;" width="12" height="12" viewBox="0 0 12 12"><path d="M2 10 L9 3 L10.5 4.5 L3.5 11.5 Z" fill="none" stroke="#aaa" stroke-width="0.9"/><rect x="0" y="10" width="11" height="2" fill="#ddd"/></svg>
<div class="t" style="left:875.00px;top:249.04px;font-size:9.5px;color:#a9a9a9;font-weight:normal;font-style:normal;font-family:'Liberation Sans',sans-serif;transform:scaleX(0.9721);transform-origin:0 0;">Contorno de forma</div>
<svg class="a" style="left:955px;top:252.1px;" width="5" height="3" viewBox="0 0 5 3"><path d="M0 0 H5 L2.5 3 Z" fill="#aaa"/></svg>
<svg class="a" style="left:862px;top:264.6px;" width="12" height="12" viewBox="0 0 12 12"><ellipse cx="6" cy="6" rx="5" ry="4" fill="none" stroke="#aaa" stroke-width="0.9"/><rect x="1" y="9" width="10" height="2" fill="#ddd"/></svg>
<div class="t" style="left:875.00px;top:266.04px;font-size:9.5px;color:#a9a9a9;font-weight:normal;font-style:normal;font-family:'Liberation Sans',sans-serif;transform:scaleX(0.9608);transform-origin:0 0;">Efectos de forma</div>
<svg class="a" style="left:947px;top:269.1px;" width="5" height="3" viewBox="0 0 5 3"><path d="M0 0 H5 L2.5 3 Z" fill="#aaa"/></svg>
<svg class="a" style="left:968px;top:230px;" width="11" height="12" viewBox="0 0 11 12"><circle cx="7" cy="4" r="3.2" fill="none" stroke="#2f6fb5" stroke-width="1.3"/><path d="M4.8 6.3 L1 10.5" stroke="#2f6fb5" stroke-width="1.6"/></svg>
<div class="t" style="left:982.00px;top:232.04px;font-size:9.5px;color:#3a3a3a;font-weight:normal;font-style:normal;font-family:'Liberation Sans',sans-serif;transform:scaleX(0.8794);transform-origin:0 0;">Buscar</div>
<svg class="a" style="left:967px;top:247px;" width="13" height="13" viewBox="0 0 13 13"><text x="0" y="6" font-size="6.5" font-family="Liberation Sans" fill="#555">ab</text><text x="4" y="12.5" font-size="6.5" font-family="Liberation Sans" fill="#2f6fb5">ac</text><path d="M1 8 Q1.5 11 4 11" fill="none" stroke="#2f6fb5" stroke-width="0.7"/></svg>
<div class="t" style="left:982.00px;top:249.14px;font-size:9.5px;color:#3a3a3a;font-weight:normal;font-style:normal;font-family:'Liberation Sans',sans-serif;transform:scaleX(0.8806);transform-origin:0 0;">Reemplazar</div>
<svg class="a" style="left:1033.5px;top:252px;" width="5" height="3" viewBox="0 0 5 3"><path d="M0 0 H5 L2.5 3 Z" fill="#555"/></svg>
<svg class="a" style="left:970px;top:264px;" width="9" height="13" viewBox="0 0 9 13"><path d="M1 1 V11 L3.5 8.5 L5.5 12.5 L7 11.7 L5 7.8 H8.5 Z" fill="#fff" stroke="#555" stroke-width="0.9"/></svg>
<div class="t" style="left:982.00px;top:266.14px;font-size:9.5px;color:#3a3a3a;font-weight:normal;font-style:normal;font-family:'Liberation Sans',sans-serif;transform:scaleX(0.8985);transform-origin:0 0;">Seleccionar</div>
<svg class="a" style="left:1027.5px;top:269px;" width="5" height="3" viewBox="0 0 5 3"><path d="M0 0 H5 L2.5 3 Z" fill="#555"/></svg>
<svg class="a" style="left:1067px;top:231px;" width="21" height="22" viewBox="0 0 21 22"><path d="M2 1 H12 L16 5 V19 H2 Z" fill="#fff" stroke="#5a8ac8" stroke-width="1"/><path d="M5 13 Q8 5 9 8 Q10 12 13 12" fill="none" stroke="#5a8ac8" stroke-width="0.9"/><path d="M13 14 L18 20 M15 13 Q20 13 20 17" fill="none" stroke="#5a8ac8" stroke-width="1.3"/></svg>
<div class="t" style="left:1064.70px;top:257.44px;font-size:9.5px;color:#3a3a3a;font-weight:normal;font-style:normal;font-family:'Liberation Sans',sans-serif;transform:scaleX(0.8840);transform-origin:0 0;">Crear</div>
<div class="t" style="left:1061.20px;top:268.84px;font-size:9.5px;color:#3a3a3a;font-weight:normal;font-style:normal;font-family:'Liberation Sans',sans-serif;transform:scaleX(0.8694);transform-origin:0 0;">un PDF</div>
<div class="a" style="left:214px;top:295px;width:11.5px;height:603px;background:#dcdbdd;"></div>
<div class="a" style="left:214px;top:295.5px;width:11.5px;height:11px;background:#fff;border:1px solid #cfcfcf"></div>
<svg class="a" style="left:216px;top:298px;" width="8" height="5" viewBox="0 0 8 5"><path d="M0.5 4.5 L4 1 L7.5 4.5 Z" fill="#666"/></svg>
<div class="a" style="left:214.5px;top:538px;width:10.5px;height:154px;background:#fff;border:1px solid #d4d4d4"></div>
<div class="a" style="left:228px;top:293px;width:1px;height:591px;background:#cfcfd1;"></div>
<div class="a" style="left:1404px;top:295px;width:11.2px;height:547.5px;background:#dcdbdd;"></div>
<div class="a" style="left:1404px;top:295.5px;width:11px;height:11px;background:#fff;border:1px solid #cfcfcf"></div>
<svg class="a" style="left:1405.5px;top:298px;" width="8" height="5" viewBox="0 0 8 5"><path d="M0.5 4.5 L4 1 L7.5 4.5 Z" fill="#666"/></svg>
<div class="a" style="left:1404.5px;top:592px;width:10.2px;height:25px;background:#fff;border:1px solid #d4d4d4"></div>
<div class="a" style="left:1404.5px;top:833px;width:10px;height:9px;background:#fff;"></div>
<svg class="a" style="left:1405.5px;top:836px;" width="8" height="5" viewBox="0 0 8 5"><path d="M0.5 0.5 L4 4 L7.5 0.5 Z" fill="#666"/></svg>
<svg class="a" style="left:1405.5px;top:845px;" width="8" height="9" viewBox="0 0 8 9"><path d="M0.5 4 L4 0.5 L7.5 4 Z M0.5 8.5 L4 5 L7.5 8.5 Z" fill="#6e6e6e"/><path d="M0.5 4.6 H7.5" stroke="#6e6e6e" stroke-width="0.8"/></svg>
<svg class="a" style="left:1405.5px;top:858px;" width="8" height="9" viewBox="0 0 8 9"><path d="M0.5 0.5 L4 4 L7.5 0.5 Z M0.5 5 L4 8.5 L7.5 5 Z" fill="#6e6e6e"/><path d="M0.5 4.4 H7.5" stroke="#6e6e6e" stroke-width="0.8"/></svg>
<div class="a" style="left:229px;top:884px;width:1187px;height:1.2px;background:#c4c4c6;"></div>
<div class="a" style="left:229px;top:885px;width:1187px;height:13px;overflow:hidden"><div class="t" style="left:9px;top:5.5px;font-size:11px;color:#666;transform:scaleX(0.97);transform-origin:0 0">Haga clic para agregar notas</div></div>
<svg width="0" height="0" style="position:absolute"><defs><symbol id="slide13" viewBox="310 303 1014 571"><defs><linearGradient id="sgl" x1="0" y1="0" x2="1" y2="0"><stop offset="0" stop-color="#cde2e4"/><stop offset="0.18" stop-color="#c8e8ea"/><stop offset="0.42" stop-color="#bff1f5"/><stop offset="0.58" stop-color="#bef2f6"/><stop offset="0.82" stop-color="#c7e8eb"/><stop offset="1" stop-color="#d0e2e4"/></linearGradient><radialGradient id="sgr" cx="50%" cy="50%" r="55%"><stop offset="0" stop-color="#baf4f9" stop-opacity="0.7"/><stop offset="1" stop-color="#baf4f9" stop-opacity="0"/></radialGradient></defs><rect x="310" y="303" width="1014" height="571" fill="url(#sgl)"/><rect x="310" y="303" width="1014" height="571" fill="url(#sgr)"/><rect x="310.5" y="303.5" width="1013" height="570" fill="none" stroke="#c6d6d7" stroke-width="1"/><path d="M410.3 356.6 L423.6 356.1 L437.0 355.1 L450.3 355.0 L463.7 356.3 L477.0 356.3 L490.4 356.2 L503.7 355.2 L517.0 356.1 L530.4 356.5 L543.7 356.1 L557.1 355.6 L570.4 355.2 L583.8 356.5 L598.1 355.6 L601.1 360.9 L603.6 366.2 L601.6 371.4 L603.3 376.7 L601.1 382.0 L603.1 387.3 L598.1 390.8 L583.8 390.2 L570.4 390.1 L557.1 390.1 L543.7 391.1 L530.4 391.3 L517.0 391.1 L503.7 390.2 L490.4 391.3 L477.0 390.7 L463.7 391.0 L450.3 391.0 L437.0 390.3 L423.6 390.0 L410.3 390.3 L403.8 387.3 L406.3 382.0 L404.3 376.7 L406.8 371.4 L404.8 366.2 L406.3 360.9 Z" fill="#8ee5cc"/><path d="M410.3 516.1 L423.6 514.6 L437.0 515.9 L450.3 515.4 L463.7 515.2 L477.0 514.9 L490.4 514.7 L503.7 514.7 L517.0 514.8 L530.4 515.3 L543.7 514.7 L557.1 514.8 L570.4 515.7 L583.8 516.0 L598.1 515.1 L601.1 520.3 L603.6 525.5 L601.6 530.7 L603.3 535.9 L601.1 541.1 L603.1 546.2 L598.1 549.7 L583.8 549.7 L570.4 549.4 L557.1 550.1 L543.7 549.2 L530.4 550.2 L517.0 549.1 L503.7 549.1 L490.4 548.9 L477.0 549.2 L463.7 549.8 L450.3 548.9 L437.0 550.2 L423.6 549.2 L410.3 549.2 L403.8 546.2 L406.3 541.1 L404.3 535.9 L406.8 530.7 L404.8 525.5 L406.3 520.3 Z" fill="#dba2c6"/><path d="M410.7 679.0 L424.0 678.2 L437.2 677.8 L450.5 678.8 L463.8 678.8 L477.1 678.3 L490.3 677.5 L503.6 678.6 L516.9 678.2 L530.1 678.3 L543.4 678.4 L556.7 677.6 L570.0 677.4 L583.2 677.9 L597.5 678.0 L600.5 683.2 L603.0 688.4 L601.0 693.7 L602.7 698.9 L600.5 704.1 L602.5 709.3 L597.5 712.8 L583.2 712.7 L570.0 713.4 L556.7 713.1 L543.4 713.1 L530.1 713.3 L516.9 713.1 L503.6 712.3 L490.3 712.3 L477.1 712.4 L463.8 713.1 L450.5 712.1 L437.2 712.7 L424.0 712.3 L410.7 712.3 L404.2 709.3 L406.7 704.1 L404.7 698.9 L407.2 693.7 L405.2 688.4 L406.7 683.2 Z" fill="#e7e2a4"/><path d="M1045.2 357.1 L1058.4 356.4 L1071.6 356.1 L1084.8 355.6 L1098.0 355.7 L1111.2 355.6 L1124.4 355.8 L1137.6 355.7 L1150.7 356.4 L1163.9 356.1 L1177.1 355.6 L1190.3 355.8 L1203.5 356.5 L1216.7 356.7 L1230.9 356.1 L1233.9 361.3 L1236.4 366.6 L1234.4 371.8 L1236.1 377.0 L1233.9 382.3 L1235.9 387.5 L1230.9 391.0 L1216.7 391.2 L1203.5 390.9 L1190.3 390.1 L1177.1 391.1 L1163.9 391.4 L1150.7 390.5 L1137.6 391.6 L1124.4 390.8 L1111.2 390.7 L1098.0 390.5 L1084.8 390.5 L1071.6 391.5 L1058.4 391.2 L1045.2 390.5 L1038.7 387.5 L1041.2 382.3 L1039.2 377.0 L1041.7 371.8 L1039.7 366.6 L1041.2 361.3 Z" fill="#8ee5cc"/><path d="M1045.2 515.1 L1058.4 513.6 L1071.6 513.7 L1084.8 513.7 L1098.0 513.6 L1111.2 514.9 L1124.4 513.7 L1137.6 513.7 L1150.7 514.8 L1163.9 514.0 L1177.1 514.0 L1190.3 514.3 L1203.5 514.9 L1216.7 514.1 L1230.9 514.1 L1233.9 519.3 L1236.4 524.6 L1234.4 529.8 L1236.1 535.0 L1233.9 540.3 L1235.9 545.5 L1230.9 549.0 L1216.7 548.3 L1203.5 548.9 L1190.3 549.2 L1177.1 549.5 L1163.9 548.1 L1150.7 548.8 L1137.6 549.3 L1124.4 549.0 L1111.2 549.3 L1098.0 548.3 L1084.8 549.6 L1071.6 548.7 L1058.4 548.5 L1045.2 548.5 L1038.7 545.5 L1041.2 540.3 L1039.2 535.0 L1041.7 529.8 L1039.7 524.6 L1041.2 519.3 Z" fill="#dba2c6"/><path d="M1045.6 679.0 L1058.8 677.9 L1071.9 677.7 L1085.1 678.5 L1098.3 678.2 L1111.5 678.1 L1124.6 678.8 L1137.8 677.6 L1151.0 678.0 L1164.1 677.7 L1177.3 678.7 L1190.5 677.6 L1203.7 678.1 L1216.8 678.6 L1231.0 678.0 L1234.0 683.2 L1236.5 688.4 L1234.5 693.7 L1236.2 698.9 L1234.0 704.1 L1236.0 709.3 L1231.0 712.8 L1216.8 712.3 L1203.7 713.1 L1190.5 712.5 L1177.3 713.1 L1164.1 712.4 L1151.0 713.2 L1137.8 713.1 L1124.6 712.1 L1111.5 711.9 L1098.3 712.4 L1085.1 712.7 L1071.9 712.4 L1058.8 712.0 L1045.6 712.3 L1039.1 709.3 L1041.6 704.1 L1039.6 698.9 L1042.1 693.7 L1040.1 688.4 L1041.6 683.2 Z" fill="#e7e2a4"/><g fill="#1a1a1a"><text x="503.7" y="380" font-size="19" font-weight="bold" font-family="Liberation Sans" text-anchor="middle">1</text><text x="503.6" y="539.6" font-size="19" font-weight="bold" font-family="Liberation Sans" text-anchor="middle">2</text><text x="503.6" y="701.5" font-size="19" font-weight="bold" font-family="Liberation Sans" text-anchor="middle">3</text><text x="1136.8" y="379.7" font-size="19" font-weight="bold" font-family="Liberation Sans" text-anchor="middle">4</text><text x="1148.6" y="539.5" font-size="19" font-weight="bold" font-family="Liberation Sans" text-anchor="middle">5</text><text x="1136.1" y="701.5" font-size="19" font-weight="bold" font-family="Liberation Sans" text-anchor="middle">6</text><text x="414" y="418.5" font-size="19" textLength="152.6" lengthAdjust="spacingAndGlyphs" font-family="Liberation Sans" font-weight="normal" font-style="normal" text-anchor="start">Uso de preguntas</text><text x="454.7" y="445.4" font-size="19" textLength="71.5" lengthAdjust="spacingAndGlyphs" font-family="Liberation Sans" font-weight="normal" font-style="normal" text-anchor="start">abiertas</text><text x="427.8" y="578.3" font-size="19" textLength="126" lengthAdjust="spacingAndGlyphs" font-family="Liberation Sans" font-weight="normal" font-style="normal" text-anchor="start">Evitar juicios y</text><text x="383" y="605.5" font-size="19" textLength="215" lengthAdjust="spacingAndGlyphs" font-family="Liberation Sans" font-weight="normal" font-style="normal" text-anchor="start">victimización secundaria</text><text x="381.8" y="741" font-size="19" textLength="217.1" lengthAdjust="spacingAndGlyphs" font-family="Liberation Sans" font-weight="normal" font-style="normal" text-anchor="start">Crear ambiente seguro y</text><text x="434" y="767.6" font-size="19" textLength="113.4" lengthAdjust="spacingAndGlyphs" font-family="Liberation Sans" font-weight="normal" font-style="normal" text-anchor="start">de confianza</text><text x="1075.8" y="415.6" font-size="19" textLength="169" lengthAdjust="spacingAndGlyphs" font-family="Liberation Sans" font-weight="normal" font-style="normal" text-anchor="start">Identificar testigos</text><text x="1114.8" y="442.5" font-size="19" textLength="91.8" lengthAdjust="spacingAndGlyphs" font-family="Liberation Sans" font-weight="normal" font-style="normal" text-anchor="start">relevantes</text><text x="1111" y="577.3" font-size="19" textLength="99.3" lengthAdjust="spacingAndGlyphs" font-family="Liberation Sans" font-weight="normal" font-style="normal" text-anchor="start">Entrevistas</text><text x="1097" y="605.2" font-size="19" textLength="127" lengthAdjust="spacingAndGlyphs" font-family="Liberation Sans" font-weight="normal" font-style="normal" text-anchor="start">estructuradas,</text><text x="1071.4" y="633.2" font-size="19" textLength="178.1" lengthAdjust="spacingAndGlyphs" font-family="Liberation Sans" font-weight="normal" font-style="normal" text-anchor="start">semiestructuradas y</text><text x="1121.2" y="659" font-size="19" textLength="78.6" lengthAdjust="spacingAndGlyphs" font-family="Liberation Sans" font-weight="normal" font-style="normal" text-anchor="start">objetivas</text><text x="1061.5" y="741" font-size="19" textLength="199" lengthAdjust="spacingAndGlyphs" font-family="Liberation Sans" font-weight="normal" font-style="normal" text-anchor="start">Protección a la víctima</text><text x="1066.4" y="767.5" font-size="19" textLength="188.5" lengthAdjust="spacingAndGlyphs" font-family="Liberation Sans" font-weight="normal" font-style="normal" text-anchor="start">durante el testimonio</text><text x="1089.7" y="795.7" font-size="19" textLength="142.6" lengthAdjust="spacingAndGlyphs" font-family="Liberation Sans" font-weight="normal" font-style="normal" text-anchor="start">(Cámara Gesell)</text></g><g fill="#121212" stroke="#121212" stroke-width="1.5" stroke-linejoin="round"><text x="733.7" y="463" font-size="47" textLength="173.3" lengthAdjust="spacingAndGlyphs" font-family="Liberation Sans" font-weight="normal" font-style="italic" text-anchor="start">Técnicas de</text><text x="716" y="531" font-size="47" textLength="222" lengthAdjust="spacingAndGlyphs" font-family="Liberation Sans" font-weight="normal" font-style="italic" text-anchor="start">Entrevista a la</text><text x="771" y="592" font-size="47" textLength="112" lengthAdjust="spacingAndGlyphs" font-family="Liberation Sans" font-weight="normal" font-style="italic" text-anchor="start">Víctima</text></g><polygon fill="none" stroke="#111" stroke-width="3.6" stroke-linejoin="miter" points="631.5,386.7 673.5,380.9 664.2,400.1 721.6,430 712.3,445 656.1,413.5 645.4,428.2"/><polygon fill="none" stroke="#111" stroke-width="3.6" stroke-linejoin="miter" points="1018.3,382.7 974.2,380.9 984.9,394.8 934.1,437.5 944.8,450.4 994.3,409.5 1007.6,424.2"/><polygon fill="none" stroke="#111" stroke-width="3.6" stroke-linejoin="miter" points="612,541.8 646,517.7 646,537.8 710.9,537.8 710.9,557.8 644.1,557.3 642.8,572.5"/><polygon fill="none" stroke="#111" stroke-width="3.6" stroke-linejoin="miter" points="929.3,550.3 997,550.3 999.6,536.4 1027.7,564.5 995.6,589.3 995.6,569.8 930.1,568.5"/><g transform="translate(610,590) scale(0.21422)" fill="none" stroke="#111" stroke-width="19" stroke-linecap="round" stroke-linejoin="round"><polygon stroke-width="16" points="400,310 455,375 235,580 265,640 60,625 105,435 175,505"/><polygon stroke-width="16" points="1485,340 1755,480 1800,412 1865,598 1670,638 1680,540 1440,410"/><path d="M598,298 C570,250 565,160 610,110 C650,65 740,60 790,95 C820,120 815,200 790,255 C775,285 755,300 735,305"/><path d="M738,168 L735,186 M770,165 L768,183" stroke-width="20"/><path d="M700,243 Q725,258 745,252"/><path d="M475,665 C478,560 495,450 545,380 C580,335 640,325 680,330 C720,340 725,420 735,500 C740,560 740,600 738,625"/><path d="M630,400 L642,625 L835,760"/><path d="M745,720 L748,800 L810,795"/><path d="M745,455 L835,490"/><path d="M765,530 L792,522 L775,565 L800,582 L770,602 L792,628 L770,652 L792,678" stroke-width="12"/><path d="M910,440 L1000,335 L1090,385 L1065,420 L1170,550 L1180,650 L1270,740 L980,775 L930,690 L945,600 L905,510"/><path d="M900,470 L1060,430 M800,570 L1145,515 M780,650 L940,600 M935,680 L1145,615 M800,690 L900,680" stroke-width="9" stroke-dasharray="40 18"/><path d="M1020,222 C1000,160 1020,90 1090,65 C1160,50 1215,100 1222,170 C1230,240 1200,295 1105,312"/><path d="M1070,118 L1068,140 M1095,115 L1093,137" stroke-width="18"/><path d="M1062,193 Q1130,195 1130,222 Q1128,245 1088,242"/><path d="M1270,285 Q1380,260 1620,182"/><path d="M1660,150 L1730,108" stroke-width="20"/><path d="M1215,350 Q1265,450 1285,560 Q1290,620 1270,655"/></g><g transform="translate(610,590) scale(0.21422)" fill="#111"><ellipse cx="885" cy="765" rx="58" ry="40" transform="rotate(20 885 765)"/><path d="M800 470 Q850 445 880 470 Q885 500 860 530 Q820 530 810 500 Z"/><ellipse cx="1655" cy="172" rx="42" ry="30" transform="rotate(-25 1655 172)"/></g></symbol></defs></svg>
<svg class="a" style="left:310px;top:303px" width="1014" height="571"><use href="#slide13"/></svg>
<svg class="a" style="left:530px;top:609px;" width="16" height="18" viewBox="0 0 16 18"><path d="M5 0.5 L6.5 2.5 H5.6 V5 H8 V4.1 L10 5.6 L8 7.1 V6.2 H5.6 V8.6 H6.5 L5 10.6 L3.5 8.6 H4.4 V6.2 H2 V7.1 L0 5.6 L2 4.1 V5 H4.4 V2.5 H3.5 Z" fill="#fff" stroke="#333" stroke-width="0.6"/><path d="M6 6 V16 L8.3 13.8 L10 17.3 L11.5 16.6 L9.8 13.2 H13 Z" fill="#fff" stroke="#222" stroke-width="0.8"/></svg>
<svg class="a" style="left:768px;top:600px;" width="12" height="12" viewBox="0 0 12 12"><path d="M1 11 L2 8 L8.5 1.5 L10.5 3.5 L4 10 Z" fill="#fff" stroke="#222" stroke-width="0.9"/></svg>
<div class="t" style="left:10.40px;top:358.12px;font-size:11px;color:#555;font-weight:normal;font-style:normal;font-family:'Liberation Sans',sans-serif;transform:scaleX(0.8990);transform-origin:0 0;">10</div>
<svg class="a" style="left:12.8px;top:369.7px;" width="9" height="9" viewBox="0 0 9 9"><path d="M4.5 0.3 L5.6 3.3 L8.8 3.4 L6.3 5.4 L7.2 8.6 L4.5 6.8 L1.8 8.6 L2.7 5.4 L0.2 3.4 L3.4 3.3 Z" fill="#858585"/></svg>
<div class="t" style="left:10.40px;top:467.02px;font-size:11px;color:#555;font-weight:normal;font-style:normal;font-family:'Liberation Sans',sans-serif;transform:scaleX(0.9633);transform-origin:0 0;">11</div>
<svg class="a" style="left:12.8px;top:478.6px;" width="9" height="9" viewBox="0 0 9 9"><path d="M4.5 0.3 L5.6 3.3 L8.8 3.4 L6.3 5.4 L7.2 8.6 L4.5 6.8 L1.8 8.6 L2.7 5.4 L0.2 3.4 L3.4 3.3 Z" fill="#858585"/></svg>
<div class="t" style="left:10.40px;top:576.22px;font-size:11px;color:#555;font-weight:normal;font-style:normal;font-family:'Liberation Sans',sans-serif;transform:scaleX(0.8990);transform-origin:0 0;">12</div>
<svg class="a" style="left:12.8px;top:587.8px;" width="9" height="9" viewBox="0 0 9 9"><path d="M4.5 0.3 L5.6 3.3 L8.8 3.4 L6.3 5.4 L7.2 8.6 L4.5 6.8 L1.8 8.6 L2.7 5.4 L0.2 3.4 L3.4 3.3 Z" fill="#858585"/></svg>
<div class="t" style="left:10.40px;top:685.52px;font-size:11px;color:#c4503c;font-weight:normal;font-style:normal;font-family:'Liberation Sans',sans-serif;transform:scaleX(0.8990);transform-origin:0 0;">13</div>
<svg class="a" style="left:12.8px;top:697.1px;" width="9" height="9" viewBox="0 0 9 9"><path d="M4.5 0.3 L5.6 3.3 L8.8 3.4 L6.3 5.4 L7.2 8.6 L4.5 6.8 L1.8 8.6 L2.7 5.4 L0.2 3.4 L3.4 3.3 Z" fill="#858585"/></svg>
<div class="t" style="left:10.40px;top:794.92px;font-size:11px;color:#555;font-weight:normal;font-style:normal;font-family:'Liberation Sans',sans-serif;transform:scaleX(0.8990);transform-origin:0 0;">14</div>
<svg class="a" style="left:12.8px;top:806.5px;" width="9" height="9" viewBox="0 0 9 9"><path d="M4.5 0.3 L5.6 3.3 L8.8 3.4 L6.3 5.4 L7.2 8.6 L4.5 6.8 L1.8 8.6 L2.7 5.4 L0.2 3.4 L3.4 3.3 Z" fill="#858585"/></svg>
<div class="a" style="left:32.8px;top:293.5px;width:166.7px;height:50.7px;background:linear-gradient(90deg,#5a66f4,#9a5cf2 30%,#d054e2 58%,#f04cc4);box-shadow:0 0 0 1px #d8d8da"></div>
<div class="a" style="left:50px;top:293.5px;width:132px;height:8.5px;background:#b9c9f0;"></div>
<div class="a" style="left:50px;top:293.5px;width:132px;height:8.5px;overflow:hidden"><div class="t" style="left:39px;top:-9px;font-size:18px;color:#fff;font-family:'Liberation Serif',serif;letter-spacing:1px">TIPOS</div></div>
<svg class="a" style="left:33.1px;top:359px;" width="167" height="95" viewBox="0 0 167 95"><defs><linearGradient id="t10" x1="0" y1="0" x2="1" y2="1"><stop offset="0" stop-color="#d3f3f6"/><stop offset="1" stop-color="#e6f7f8"/></linearGradient></defs><rect x="0" y="0" width="167" height="95" fill="url(#t10)" stroke="#d0d8d8" stroke-width="1"/><polygon points="34.70,14.80 31.70,20.00 25.70,20.00 22.70,14.80 25.70,9.60 31.70,9.60" fill="#f5b95a"/><rect x="28.2" y="20.3" width="1" height="4" fill="#555"/><rect x="12.2" y="22.7" width="33" height="11" rx="5.5" fill="#f5b95a"/><rect x="18.7" y="27.4" width="20" height="1.6" fill="#333" opacity="0.7"/><rect x="12.7" y="36.3" width="32" height="1.5" fill="#222" opacity="0.6"/><rect x="12.7" y="38.9" width="32" height="1.5" fill="#222" opacity="0.6"/><rect x="12.7" y="41.5" width="32" height="1.5" fill="#222" opacity="0.6"/><rect x="16.7" y="44.1" width="24" height="1.5" fill="#222" opacity="0.6"/><polygon points="70.90,14.80 67.90,20.00 61.90,20.00 58.90,14.80 61.90,9.60 67.90,9.60" fill="#5cc87a"/><rect x="64.4" y="20.3" width="1" height="4" fill="#555"/><rect x="48.4" y="22.7" width="33" height="11" rx="5.5" fill="#5cc87a"/><rect x="54.9" y="27.4" width="20" height="1.6" fill="#333" opacity="0.7"/><rect x="48.9" y="36.3" width="32" height="1.5" fill="#222" opacity="0.6"/><rect x="48.9" y="38.9" width="32" height="1.5" fill="#222" opacity="0.6"/><rect x="48.9" y="41.5" width="32" height="1.5" fill="#222" opacity="0.6"/><rect x="52.9" y="44.1" width="24" height="1.5" fill="#222" opacity="0.6"/><polygon points="106.90,14.80 103.90,20.00 97.90,20.00 94.90,14.80 97.90,9.60 103.90,9.60" fill="#c25ee0"/><rect x="100.4" y="20.3" width="1" height="4" fill="#555"/><rect x="84.4" y="22.7" width="33" height="11" rx="5.5" fill="#c25ee0"/><rect x="90.9" y="27.4" width="20" height="1.6" fill="#333" opacity="0.7"/><rect x="84.9" y="36.3" width="32" height="1.5" fill="#222" opacity="0.6"/><rect x="84.9" y="38.9" width="32" height="1.5" fill="#222" opacity="0.6"/><rect x="84.9" y="41.5" width="32" height="1.5" fill="#222" opacity="0.6"/><rect x="88.9" y="44.1" width="24" height="1.5" fill="#222" opacity="0.6"/><polygon points="143.70,14.80 140.70,20.00 134.70,20.00 131.70,14.80 134.70,9.60 140.70,9.60" fill="#36c1d4"/><rect x="137.2" y="20.3" width="1" height="4" fill="#555"/><rect x="121.2" y="22.7" width="33" height="11" rx="5.5" fill="#36c1d4"/><rect x="127.7" y="27.4" width="20" height="1.6" fill="#333" opacity="0.7"/><rect x="121.7" y="36.3" width="32" height="1.5" fill="#222" opacity="0.6"/><rect x="121.7" y="38.9" width="32" height="1.5" fill="#222" opacity="0.6"/><rect x="121.7" y="41.5" width="32" height="1.5" fill="#222" opacity="0.6"/><rect x="125.7" y="44.1" width="24" height="1.5" fill="#222" opacity="0.6"/><polygon points="34.70,54.20 31.70,59.40 25.70,59.40 22.70,54.20 25.70,49.00 31.70,49.00" fill="#ea5064"/><rect x="28.2" y="59.7" width="1" height="4" fill="#555"/><rect x="12.2" y="62.9" width="33" height="11" rx="5.5" fill="#ea5064"/><rect x="18.7" y="67.6" width="20" height="1.6" fill="#333" opacity="0.7"/><rect x="12.7" y="75.5" width="32" height="1.5" fill="#222" opacity="0.6"/><rect x="12.7" y="78.1" width="32" height="1.5" fill="#222" opacity="0.6"/><rect x="12.7" y="80.7" width="32" height="1.5" fill="#222" opacity="0.6"/><rect x="16.7" y="83.3" width="24" height="1.5" fill="#222" opacity="0.6"/><polygon points="70.90,54.20 67.90,59.40 61.90,59.40 58.90,54.20 61.90,49.00 67.90,49.00" fill="#9ea4e6"/><rect x="64.4" y="59.7" width="1" height="4" fill="#555"/><rect x="48.4" y="62.9" width="33" height="11" rx="5.5" fill="#9ea4e6"/><rect x="54.9" y="67.6" width="20" height="1.6" fill="#333" opacity="0.7"/><rect x="48.9" y="75.5" width="32" height="1.5" fill="#222" opacity="0.6"/><rect x="48.9" y="78.1" width="32" height="1.5" fill="#222" opacity="0.6"/><rect x="48.9" y="80.7" width="32" height="1.5" fill="#222" opacity="0.6"/><rect x="52.9" y="83.3" width="24" height="1.5" fill="#222" opacity="0.6"/><polygon points="106.90,54.20 103.90,59.40 97.90,59.40 94.90,54.20 97.90,49.00 103.90,49.00" fill="#f08a3e"/><rect x="100.4" y="59.7" width="1" height="4" fill="#555"/><rect x="84.4" y="62.9" width="33" height="11" rx="5.5" fill="#f08a3e"/><rect x="90.9" y="67.6" width="20" height="1.6" fill="#333" opacity="0.7"/><rect x="84.9" y="75.5" width="32" height="1.5" fill="#222" opacity="0.6"/><rect x="84.9" y="78.1" width="32" height="1.5" fill="#222" opacity="0.6"/><rect x="84.9" y="80.7" width="32" height="1.5" fill="#222" opacity="0.6"/><rect x="88.9" y="83.3" width="24" height="1.5" fill="#222" opacity="0.6"/><polygon points="143.70,54.20 140.70,59.40 134.70,59.40 131.70,54.20 134.70,49.00 140.70,49.00" fill="#d8408a"/><rect x="137.2" y="59.7" width="1" height="4" fill="#555"/><rect x="121.2" y="62.9" width="33" height="11" rx="5.5" fill="#d8408a"/><rect x="127.7" y="67.6" width="20" height="1.6" fill="#333" opacity="0.7"/><rect x="121.7" y="75.5" width="32" height="1.5" fill="#222" opacity="0.6"/><rect x="121.7" y="78.1" width="32" height="1.5" fill="#222" opacity="0.6"/><rect x="121.7" y="80.7" width="32" height="1.5" fill="#222" opacity="0.6"/><rect x="125.7" y="83.3" width="24" height="1.5" fill="#222" opacity="0.6"/></svg>
<svg class="a" style="left:33.3px;top:469.3px;" width="166.5" height="93.5" viewBox="0 0 166.5 93.5"><rect x="0" y="0" width="166.5" height="93.5" fill="#6b2a9f"/><text x="81" y="8.5" font-size="8" font-family="Liberation Serif" fill="#f4eefa" text-anchor="middle" textLength="89" lengthAdjust="spacingAndGlyphs">Estructura para el manejo de</text><text x="81" y="15.5" font-size="8" font-family="Liberation Serif" fill="#f4eefa" text-anchor="middle" textLength="37" lengthAdjust="spacingAndGlyphs">la entrevista</text><circle cx="81" cy="52" r="32" fill="none" stroke="#8a56b8" stroke-width="0.7"/><circle cx="67.7" cy="42.4" r="12" fill="#9c6fd9"/><circle cx="94.7" cy="42.4" r="13" fill="#e7b52e"/><circle cx="67.2" cy="68.2" r="11" fill="#e06472"/><circle cx="94.7" cy="68.2" r="11" fill="#33b3a4"/><rect x="61" y="38" width="13" height="1.2" fill="#fff" opacity="0.5"/><rect x="87" y="38" width="15" height="1.2" fill="#fff" opacity="0.5"/><rect x="61" y="41" width="13" height="1.2" fill="#fff" opacity="0.5"/><rect x="87" y="41" width="15" height="1.2" fill="#fff" opacity="0.5"/><rect x="61" y="44" width="13" height="1.2" fill="#fff" opacity="0.5"/><rect x="87" y="44" width="15" height="1.2" fill="#fff" opacity="0.5"/><rect x="61" y="47" width="13" height="1.2" fill="#fff" opacity="0.5"/><rect x="87" y="47" width="15" height="1.2" fill="#fff" opacity="0.5"/><rect x="61" y="67.5" width="12" height="1.5" fill="#fff" opacity="0.85"/><rect x="88" y="67.5" width="13" height="1.5" fill="#fff" opacity="0.85"/><rect x="16" y="17" width="9" height="1.3" fill="#fff" opacity="0.6"/><rect x="18" y="20" width="14" height="1.3" fill="#fff" opacity="0.6"/><rect x="18" y="23" width="20" height="1.3" fill="#fff" opacity="0.6"/><rect x="18" y="26" width="13" height="1.3" fill="#fff" opacity="0.6"/><rect x="18" y="29" width="21" height="1.3" fill="#fff" opacity="0.6"/><rect x="18" y="32" width="19" height="1.3" fill="#fff" opacity="0.6"/><rect x="18" y="35" width="19" height="1.3" fill="#fff" opacity="0.6"/><rect x="18" y="38" width="20" height="1.3" fill="#fff" opacity="0.6"/><rect x="18" y="41" width="12" height="1.3" fill="#fff" opacity="0.6"/><rect x="16" y="64.5" width="15" height="1.3" fill="#fff" opacity="0.6"/><rect x="16" y="68" width="20" height="1.3" fill="#fff" opacity="0.6"/><rect x="16" y="71.5" width="12" height="1.3" fill="#fff" opacity="0.6"/><rect x="117" y="25" width="10" height="1.3" fill="#fff" opacity="0.6"/><rect x="117" y="28.5" width="10" height="1.3" fill="#fff" opacity="0.6"/><rect x="117" y="32" width="30" height="1.3" fill="#fff" opacity="0.6"/><rect x="117" y="35.5" width="28" height="1.3" fill="#fff" opacity="0.6"/><rect x="117" y="39" width="16" height="1.3" fill="#fff" opacity="0.6"/><rect x="117" y="56" width="33" height="1.3" fill="#fff" opacity="0.6"/><rect x="117" y="60" width="20" height="1.3" fill="#fff" opacity="0.6"/><rect x="117" y="64" width="31" height="1.3" fill="#fff" opacity="0.6"/><rect x="117" y="68" width="24" height="1.3" fill="#fff" opacity="0.6"/><rect x="117" y="72" width="34" height="1.3" fill="#fff" opacity="0.6"/><rect x="117" y="76" width="20" height="1.3" fill="#fff" opacity="0.6"/></svg>
<div class="a" style="left:32.9px;top:578.2px;width:167.3px;height:94px;background:linear-gradient(90deg,#8a48f6,#84a8f2 45%,#7ad8ec 70%,#66ece2);box-shadow:0 0 0 1px #d8d8da"></div>
<svg class="a" style="left:32.9px;top:578.2px;" width="167.3" height="94" viewBox="0 0 167.3 94"><text x="21" y="52" font-size="37" font-weight="bold" font-family="Liberation Sans" fill="#0a0a0a" textLength="124" lengthAdjust="spacingAndGlyphs">ENTREVISTA</text><rect x="17.1" y="42.5" width="132" height="9.3" fill="#b8c8ee"/><text x="38.4" y="49.7" font-size="20" font-family="Liberation Serif" fill="#fff" textLength="92.6" lengthAdjust="spacingAndGlyphs">TÉCNICAS</text></svg>
<div class="a" style="left:30.4px;top:684.9px;width:171.7px;height:99.1px;background:#fff;border:2px solid #c4432e"></div>
<svg class="a" style="left:32.5px;top:687px" width="167.5" height="95"><use href="#slide13"/></svg>
<svg class="a" style="left:33.3px;top:797.3px;" width="166" height="93" viewBox="0 0 166 93"><rect x="0" y="0" width="166" height="93" fill="#4a46e6"/><text x="89.75" y="11.8" font-size="10.5" font-weight="normal" font-family="Liberation Serif" fill="#fff" text-anchor="middle" textLength="112.5" lengthAdjust="spacingAndGlyphs">RECOMENDACIONES PARA</text><text x="89.75" y="20.3" font-size="10.5" font-weight="normal" font-family="Liberation Serif" fill="#fff" text-anchor="middle" textLength="83.3" lengthAdjust="spacingAndGlyphs">EL ENTREVISTADOR</text><circle cx="16.5" cy="11" r="4" fill="#f5d040"/><rect x="14.8" y="14.5" width="3.4" height="2.5" fill="#777"/><rect x="9.9" y="24.4" width="13.2" height="13" fill="#a3b1f7"/><rect x="87.4" y="24.4" width="13.6" height="13" fill="#62d792"/><rect x="13" y="29.4" width="7" height="3" fill="#333" opacity="0.8"/><rect x="90.5" y="29.4" width="7" height="3" fill="#333" opacity="0.8"/><rect x="26.9" y="23.9" width="51" height="14" fill="#fff"/><rect x="104.4" y="23.9" width="51.3" height="14" fill="#fff"/><rect x="28.5" y="26.4" width="47" height="1" fill="#333" opacity="0.55"/><rect x="28.5" y="29.6" width="47" height="1" fill="#333" opacity="0.55"/><rect x="28.5" y="32.8" width="47" height="1" fill="#333" opacity="0.55"/><rect x="106" y="26.4" width="47" height="1" fill="#333" opacity="0.55"/><rect x="106" y="29.6" width="47" height="1" fill="#333" opacity="0.55"/><rect x="106" y="32.8" width="47" height="1" fill="#333" opacity="0.55"/><rect x="77" y="21.9" width="2" height="5" fill="#9ac"/><rect x="154.5" y="21.9" width="2" height="5" fill="#9ac"/><rect x="9.9" y="47.4" width="13.2" height="13" fill="#f7d962"/><rect x="87.4" y="47.4" width="13.6" height="13" fill="#c2aaf8"/><rect x="13" y="52.4" width="7" height="3" fill="#333" opacity="0.8"/><rect x="90.5" y="52.4" width="7" height="3" fill="#333" opacity="0.8"/><rect x="26.9" y="46.9" width="51" height="14" fill="#fff"/><rect x="104.4" y="46.9" width="51.3" height="14" fill="#fff"/><rect x="28.5" y="49.4" width="47" height="1" fill="#333" opacity="0.55"/><rect x="28.5" y="52.6" width="47" height="1" fill="#333" opacity="0.55"/><rect x="28.5" y="55.8" width="47" height="1" fill="#333" opacity="0.55"/><rect x="106" y="49.4" width="47" height="1" fill="#333" opacity="0.55"/><rect x="106" y="52.6" width="47" height="1" fill="#333" opacity="0.55"/><rect x="106" y="55.8" width="47" height="1" fill="#333" opacity="0.55"/><rect x="77" y="44.9" width="2" height="5" fill="#9ac"/><rect x="154.5" y="44.9" width="2" height="5" fill="#9ac"/><rect x="9.9" y="69.8" width="13.2" height="13" fill="#f2b2f0"/><rect x="87.4" y="69.8" width="13.6" height="13" fill="#f7b2c2"/><rect x="13" y="74.8" width="7" height="3" fill="#333" opacity="0.8"/><rect x="90.5" y="74.8" width="7" height="3" fill="#333" opacity="0.8"/><rect x="26.9" y="69.3" width="51" height="14" fill="#fff"/><rect x="104.4" y="69.3" width="51.3" height="19" fill="#fff"/><rect x="28.5" y="75.8" width="47" height="1" fill="#333" opacity="0.55"/><rect x="106" y="71.8" width="47" height="1" fill="#333" opacity="0.55"/><rect x="106" y="75" width="47" height="1" fill="#333" opacity="0.55"/><rect x="106" y="78.2" width="47" height="1" fill="#333" opacity="0.55"/><rect x="106" y="81.4" width="47" height="1" fill="#333" opacity="0.55"/><rect x="106" y="84.6" width="47" height="1" fill="#333" opacity="0.55"/><rect x="77" y="67.3" width="2" height="5" fill="#9ac"/><rect x="154.5" y="67.3" width="2" height="5" fill="#9ac"/></svg>
<div class="a" style="left:1421px;top:178px;width:2px;height:720px;background:#0f9a0f;"></div>
<div class="a" style="left:1436px;top:0px;width:476.5px;height:898px;background:#1c1c1c;border-radius:7px 7px 0 0"></div>
<svg width="0" height="0" style="position:absolute">
<defs>
<symbol id="ih" viewBox="0 0 16 16"><path d="M2.4 8.4 A5.6 5.9 0 0 1 13.6 8.4" fill="none" stroke="#e8e8e8" stroke-width="1.05"/><ellipse cx="2.3" cy="8.8" rx="1.1" ry="1.9" fill="none" stroke="#e8e8e8" stroke-width="1"/><ellipse cx="13.7" cy="8.8" rx="1.1" ry="1.9" fill="none" stroke="#e8e8e8" stroke-width="1"/><path d="M13.4 10.8 Q12.2 13.4 8.7 14" fill="none" stroke="#e8e8e8" stroke-width="1"/><circle cx="7.6" cy="14.1" r="1.05" fill="none" stroke="#e8e8e8" stroke-width="1"/></symbol>
<symbol id="ip" viewBox="0 0 16 16"><rect x="3.2" y="0.8" width="9.6" height="14.2" rx="2" fill="none" stroke="#e8e8e8" stroke-width="1.05"/><path d="M3.5 12.2 H12.5" stroke="#e8e8e8" stroke-width="1"/><path d="M8 12.2 V15" stroke="#e8e8e8" stroke-width="0.7"/></symbol>
<symbol id="im" viewBox="0 0 16 16"><path d="M5.6 3.2 A2.5 2.5 0 0 1 10.6 3.2 V9.6 A2.5 2.5 0 0 1 5.6 9.6 Z" fill="none" stroke="#f08a96" stroke-width="1"/><path d="M7.6 12.2 V14 M3.6 14.3 H11.6 M1.8 1.6 L14 13.8" stroke="#f08a96" stroke-width="1" fill="none"/></symbol>
</defs></svg>
<svg class="a" style="left:1448px;top:13px;" width="16" height="12" viewBox="0 0 16 12"><path d="M1.5 2.5 L8 9 L14.5 2.5" fill="none" stroke="#e0e0e0" stroke-width="1.3"/></svg>
<div class="t" style="left:1472.00px;top:12.30px;font-size:15px;color:#f0f0f0;font-weight:bold;font-style:normal;font-family:'Liberation Sans',sans-serif;transform:scaleX(1.0076);transform-origin:0 0;">Participantes (26)</div>
<svg class="a" style="left:1857px;top:12px;" width="15" height="15" viewBox="0 0 15 15"><path d="M6 1.2 H3.5 A2.3 2.3 0 0 0 1.2 3.5 V10.7 A2.3 2.3 0 0 0 3.5 13 H10.7 A2.3 2.3 0 0 0 13 10.7 V9 M8.5 1.2 H13 V5.7 M13 1.2 L7.5 6.7" fill="none" stroke="#dcdcdc" stroke-width="1.15"/></svg>
<svg class="a" style="left:1886px;top:12px;" width="14" height="14" viewBox="0 0 14 14"><path d="M2 2 L12 12 M12 2 L2 12" stroke="#e0e0e0" stroke-width="1.3"/></svg>
<div class="a" style="left:1450px;top:51px;width:415px;height:28px;background:#000;border:1px solid #8a8a8a;border-radius:8px"></div>
<svg class="a" style="left:1457px;top:58px;" width="14" height="14" viewBox="0 0 14 14"><circle cx="6.8" cy="6.8" r="4.9" fill="none" stroke="#d0d0d0" stroke-width="1.2"/><path d="M10.3 10.3 L12.8 12.8" stroke="#d0d0d0" stroke-width="1.2"/></svg>
<div class="t" style="left:1478.50px;top:58.78px;font-size:14px;color:#b8b8b8;font-weight:normal;font-style:normal;font-family:'Liberation Sans',sans-serif;transform:scaleX(0.8951);transform-origin:0 0;">Buscar</div>
<svg class="a" style="left:1881px;top:56px;" width="16" height="17" viewBox="0 0 16 17"><path d="M4.5 2 V15 M1.5 12 L4.5 15 L7.5 12 M11.5 15 V2 M8.5 5 L11.5 2 L14.5 5" fill="none" stroke="#e8e8e8" stroke-width="1.2"/></svg>
<div class="a" style="left:1455px;top:86.5px;width:29px;height:2.5px;overflow:hidden"><div style="position:absolute;left:0;top:-26.5px;width:29px;height:29px;border-radius:50%;background:#666"></div></div>
<div class="a" style="left:1455.5px;top:109px;width:29px;height:29px;background:#686868;border-radius:50%"></div>
<div class="t" style="left:1461.00px;top:118.54px;font-size:12px;color:#dedede;font-weight:normal;font-style:normal;font-family:'Liberation Sans',sans-serif;">GC</div>
<svg class="a" style="left:1496px;top:114px" width="16" height="16"><use href="#ih"/></svg>
<div class="t" style="left:1521.50px;top:116.30px;font-size:15px;color:#f0f0f0;font-weight:normal;font-style:normal;font-family:'Liberation Sans',sans-serif;transform:scaleX(1.0179);transform-origin:0 0;">Gabriel Cruz</div>
<svg class="a" style="left:1863px;top:115.5px" width="16" height="16"><use href="#im"/></svg>
<div class="a" style="left:1455.5px;top:159px;width:29px;height:29px;background:#686868;border-radius:50%"></div>
<div class="t" style="left:1460.33px;top:168.54px;font-size:12px;color:#dedede;font-weight:normal;font-style:normal;font-family:'Liberation Sans',sans-serif;">GM</div>
<svg class="a" style="left:1496px;top:165px" width="16" height="16"><use href="#ip"/></svg>
<div class="t" style="left:1521.50px;top:166.30px;font-size:15px;color:#f0f0f0;font-weight:normal;font-style:normal;font-family:'Liberation Sans',sans-serif;transform:scaleX(1.0316);transform-origin:0 0;">Gian Mojica</div>
<svg class="a" style="left:1863px;top:165.5px" width="16" height="16"><use href="#im"/></svg>
<div class="a" style="left:1455.5px;top:209px;width:29px;height:29px;background:#686868;border-radius:50%"></div>
<div class="t" style="left:1460.33px;top:218.54px;font-size:12px;color:#dedede;font-weight:normal;font-style:normal;font-family:'Liberation Sans',sans-serif;">GM</div>
<svg class="a" style="left:1496px;top:214px" width="16" height="16"><use href="#ih"/></svg>
<div class="t" style="left:1521.50px;top:216.30px;font-size:15px;color:#f0f0f0;font-weight:normal;font-style:normal;font-family:'Liberation Sans',sans-serif;transform:scaleX(1.0089);transform-origin:0 0;">Greeyssa Martinez</div>
<svg class="a" style="left:1863px;top:215.5px" width="16" height="16"><use href="#im"/></svg>
<div class="a" style="left:1455.5px;top:259px;width:29px;height:29px;background:#686868;border-radius:50%"></div>
<div class="t" style="left:1462.67px;top:268.54px;font-size:12px;color:#dedede;font-weight:normal;font-style:normal;font-family:'Liberation Sans',sans-serif;">JC</div>
<svg class="a" style="left:1496px;top:265px" width="16" height="16"><use href="#ip"/></svg>
<div class="t" style="left:1521.50px;top:266.30px;font-size:15px;color:#f0f0f0;font-weight:normal;font-style:normal;font-family:'Liberation Sans',sans-serif;">Jahziel Contreras</div>
<svg class="a" style="left:1863px;top:265.5px" width="16" height="16"><use href="#im"/></svg>
<div class="a" style="left:1455.5px;top:309px;width:29px;height:29px;background:#686868;border-radius:50%"></div>
<div class="t" style="left:1463.00px;top:318.54px;font-size:12px;color:#dedede;font-weight:normal;font-style:normal;font-family:'Liberation Sans',sans-serif;">JS</div>
<svg class="a" style="left:1496px;top:315px" width="16" height="16"><use href="#ip"/></svg>
<div class="t" style="left:1521.50px;top:316.30px;font-size:15px;color:#f0f0f0;font-weight:normal;font-style:normal;font-family:'Liberation Sans',sans-serif;transform:scaleX(0.9800);transform-origin:0 0;">Joel Saldaña</div>
<svg class="a" style="left:1863px;top:315.5px" width="16" height="16"><use href="#im"/></svg>
<div class="a" style="left:1455.5px;top:359px;width:29px;height:29px;background:#686868;border-radius:50%"></div>
<div class="t" style="left:1461.66px;top:368.54px;font-size:12px;color:#dedede;font-weight:normal;font-style:normal;font-family:'Liberation Sans',sans-serif;">KC</div>
<svg class="a" style="left:1496px;top:365px" width="16" height="16"><use href="#ip"/></svg>
<div class="t" style="left:1521.50px;top:366.30px;font-size:15px;color:#f0f0f0;font-weight:normal;font-style:normal;font-family:'Liberation Sans',sans-serif;transform:scaleX(0.9173);transform-origin:0 0;">KRISTEL CASTRO</div>
<svg class="a" style="left:1863px;top:365.5px" width="16" height="16"><use href="#im"/></svg>
<div class="a" style="left:1455.5px;top:409px;width:29px;height:29px;background:#686868;border-radius:50%"></div>
<div class="t" style="left:1462.33px;top:418.54px;font-size:12px;color:#dedede;font-weight:normal;font-style:normal;font-family:'Liberation Sans',sans-serif;">LR</div>
<svg class="a" style="left:1496px;top:415px" width="16" height="16"><use href="#ip"/></svg>
<div class="t" style="left:1521.50px;top:416.30px;font-size:15px;color:#f0f0f0;font-weight:normal;font-style:normal;font-family:'Liberation Sans',sans-serif;transform:scaleX(1.0232);transform-origin:0 0;">Liznerys Romero</div>
<svg class="a" style="left:1863px;top:415.5px" width="16" height="16"><use href="#im"/></svg>
<div class="a" style="left:1455.5px;top:459px;width:29px;height:29px;background:#686868;border-radius:50%"></div>
<div class="t" style="left:1462.33px;top:468.54px;font-size:12px;color:#dedede;font-weight:normal;font-style:normal;font-family:'Liberation Sans',sans-serif;">LC</div>
<svg class="a" style="left:1496px;top:464px" width="16" height="16"><use href="#ih"/></svg>
<div class="t" style="left:1521.50px;top:466.30px;font-size:15px;color:#f0f0f0;font-weight:normal;font-style:normal;font-family:'Liberation Sans',sans-serif;transform:scaleX(0.9322);transform-origin:0 0;">LUIS CASTILLERO</div>
<svg class="a" style="left:1863px;top:465.5px" width="16" height="16"><use href="#im"/></svg>
<div class="a" style="left:1455.5px;top:509px;width:29px;height:29px;background:#686868;border-radius:50%"></div>
<div class="t" style="left:1460.67px;top:518.54px;font-size:12px;color:#dedede;font-weight:normal;font-style:normal;font-family:'Liberation Sans',sans-serif;">MU</div>
<svg class="a" style="left:1496px;top:515px" width="16" height="16"><use href="#ip"/></svg>
<div class="t" style="left:1521.50px;top:516.30px;font-size:15px;color:#f0f0f0;font-weight:normal;font-style:normal;font-family:'Liberation Sans',sans-serif;transform:scaleX(1.0388);transform-origin:0 0;">Madeline Ureña</div>
<svg class="a" style="left:1863px;top:515.5px" width="16" height="16"><use href="#im"/></svg>
<div class="a" style="left:1455.5px;top:559px;width:29px;height:29px;background:#686868;border-radius:50%"></div>
<div class="t" style="left:1460.00px;top:568.54px;font-size:12px;color:#dedede;font-weight:normal;font-style:normal;font-family:'Liberation Sans',sans-serif;">MM</div>
<svg class="a" style="left:1496px;top:564px" width="16" height="16"><use href="#ih"/></svg>
<div class="t" style="left:1521.50px;top:566.30px;font-size:15px;color:#f0f0f0;font-weight:normal;font-style:normal;font-family:'Liberation Sans',sans-serif;transform:scaleX(1.0559);transform-origin:0 0;">Mailyn Morales</div>
<svg class="a" style="left:1863px;top:565.5px" width="16" height="16"><use href="#im"/></svg>
<div class="a" style="left:1455.5px;top:609px;width:29px;height:29px;background:#686868;border-radius:50%"></div>
<div class="t" style="left:1461.34px;top:618.54px;font-size:12px;color:#dedede;font-weight:normal;font-style:normal;font-family:'Liberation Sans',sans-serif;">MT</div>
<svg class="a" style="left:1496px;top:614px" width="16" height="16"><use href="#ih"/></svg>
<div class="t" style="left:1521.50px;top:616.30px;font-size:15px;color:#f0f0f0;font-weight:normal;font-style:normal;font-family:'Liberation Sans',sans-serif;transform:scaleX(1.0631);transform-origin:0 0;">modesto tuñon</div>
<div class="a" style="left:1441px;top:649px;width:452px;height:49px;background:#333;border-radius:25px"></div>
<div class="a" style="left:1455.5px;top:659px;width:29px;height:29px;background:#686868;border-radius:50%"></div>
<div class="t" style="left:1462.00px;top:668.54px;font-size:12px;color:#dedede;font-weight:normal;font-style:normal;font-family:'Liberation Sans',sans-serif;">SS</div>
<svg class="a" style="left:1496px;top:665px" width="16" height="16"><use href="#ip"/></svg>
<div class="t" style="left:1521.50px;top:666.30px;font-size:15px;color:#f0f0f0;font-weight:normal;font-style:normal;font-family:'Liberation Sans',sans-serif;transform:scaleX(1.0064);transform-origin:0 0;">Saray Samaniego</div>
<svg class="a" style="left:1863px;top:665.5px" width="16" height="16"><use href="#im"/></svg>
<div class="a" style="left:1455.5px;top:709px;width:29px;height:29px;background:#686868;border-radius:50%"></div>
<div class="t" style="left:1462.00px;top:718.54px;font-size:12px;color:#dedede;font-weight:normal;font-style:normal;font-family:'Liberation Sans',sans-serif;">VE</div>
<svg class="a" style="left:1496px;top:714px" width="16" height="16"><use href="#ih"/></svg>
<div class="t" style="left:1521.50px;top:716.30px;font-size:15px;color:#f0f0f0;font-weight:normal;font-style:normal;font-family:'Liberation Sans',sans-serif;transform:scaleX(1.0086);transform-origin:0 0;">velkys espinosa</div>
<svg class="a" style="left:1863px;top:715.5px" width="16" height="16"><use href="#im"/></svg>
<div class="a" style="left:1455.5px;top:759px;width:29px;height:29px;background:#686868;border-radius:50%"></div>
<div class="t" style="left:1462.66px;top:768.54px;font-size:12px;color:#dedede;font-weight:normal;font-style:normal;font-family:'Liberation Sans',sans-serif;">YL</div>
<svg class="a" style="left:1496px;top:765px" width="16" height="16"><use href="#ip"/></svg>
<div class="t" style="left:1521.50px;top:766.30px;font-size:15px;color:#f0f0f0;font-weight:normal;font-style:normal;font-family:'Liberation Sans',sans-serif;transform:scaleX(1.0401);transform-origin:0 0;">yadira lorenzo</div>
<svg class="a" style="left:1863px;top:765.5px" width="16" height="16"><use href="#im"/></svg>
<div class="a" style="left:1455.5px;top:809px;width:29px;height:29px;background:#686868;border-radius:50%"></div>
<div class="t" style="left:1461.33px;top:818.54px;font-size:12px;color:#dedede;font-weight:normal;font-style:normal;font-family:'Liberation Sans',sans-serif;">YG</div>
<svg class="a" style="left:1496px;top:814px" width="16" height="16"><use href="#ih"/></svg>
<div class="t" style="left:1521.50px;top:816.30px;font-size:15px;color:#f0f0f0;font-weight:normal;font-style:normal;font-family:'Liberation Sans',sans-serif;transform:scaleX(0.9949);transform-origin:0 0;">Yeimis Galvez</div>
<svg class="a" style="left:1863px;top:815.5px" width="16" height="16"><use href="#im"/></svg>
<div class="a" style="left:1455.5px;top:859px;width:29px;height:29px;background:#686868;border-radius:50%"></div>
<div class="t" style="left:1461.66px;top:868.54px;font-size:12px;color:#dedede;font-weight:normal;font-style:normal;font-family:'Liberation Sans',sans-serif;">YC</div>
<svg class="a" style="left:1496px;top:864px" width="16" height="16"><use href="#ih"/></svg>
<div class="t" style="left:1521.50px;top:866.30px;font-size:15px;color:#f0f0f0;font-weight:normal;font-style:normal;font-family:'Liberation Sans',sans-serif;transform:scaleX(0.9271);transform-origin:0 0;">YESSENIA CASTRO</div>
<svg class="a" style="left:1863px;top:865.5px" width="16" height="16"><use href="#im"/></svg>
<div class="a" style="left:1897px;top:87px;width:15px;height:811px;background:#2c2c2c;border-radius:8px 8px 0 0"></div>
<svg class="a" style="left:1899px;top:90px;" width="11" height="8" viewBox="0 0 11 8"><path d="M1.5 6.5 L5.5 2.5 L9.5 6.5" fill="none" stroke="#8a8a8a" stroke-width="1"/></svg>
<div class="a" style="left:1900px;top:396px;width:9px;height:487px;background:#565656;border-radius:5px"></div>
<svg class="a" style="left:1899px;top:885px;" width="11" height="8" viewBox="0 0 11 8"><path d="M1.5 1.5 L5.5 5.5 L9.5 1.5" fill="none" stroke="#8a8a8a" stroke-width="1"/></svg>
</body></html>
